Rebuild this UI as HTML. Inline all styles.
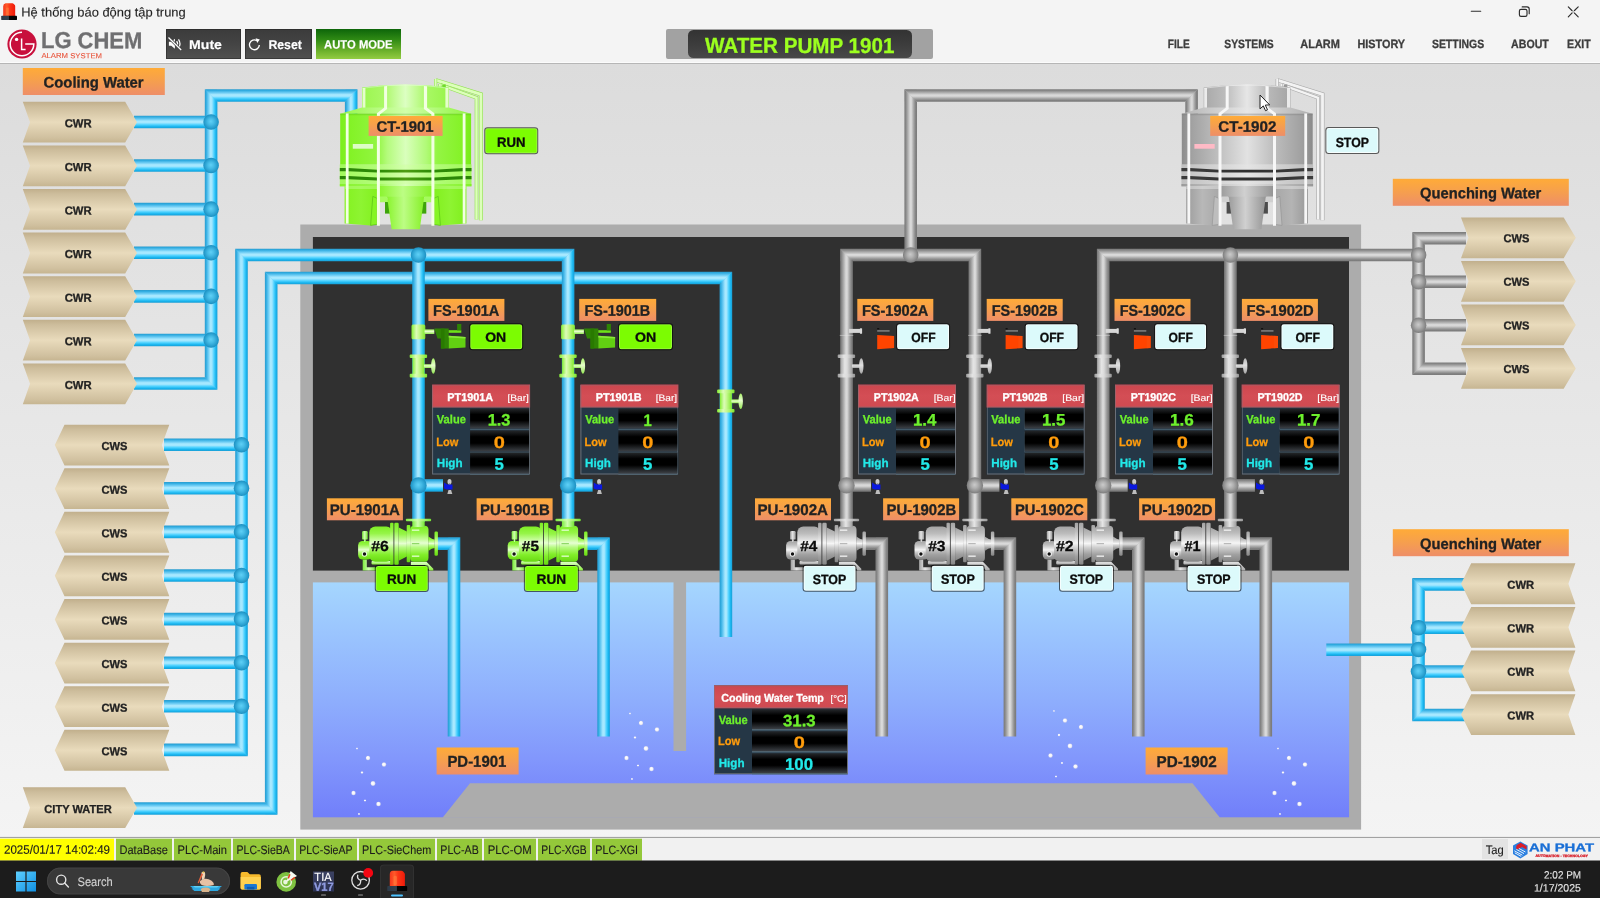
<!DOCTYPE html>
<html lang="vi">
<head>
<meta charset="utf-8">
<title>Hệ thống báo động tập trung - WATER PUMP 1901</title>
<style>
*{box-sizing:content-box;margin:0;padding:0}
html,body{width:1600px;height:898px;overflow:hidden;background:#f3f3f3}
body{position:relative;font-family:"Liberation Sans",sans-serif;font-weight:700;color:#222}
#scr{position:absolute;left:0;top:0;width:1600px;height:898px;overflow:hidden;will-change:transform}
#cv{position:absolute;left:0;top:64px;width:1600px;height:774px;background:linear-gradient(#dcdcdc,#f4f4f4)}
#gfx{position:absolute;left:0;top:0}
.t{position:absolute;white-space:nowrap;transform-origin:0 0;display:block;-webkit-text-stroke:.3px currentColor}
.t.r{-webkit-text-stroke:.12px currentColor}
.t.w{-webkit-text-stroke:.15px currentColor}
.lb,.bn,.pt,.ph,.pr,.pv{position:absolute;transform-origin:0 0}
.lb{background:linear-gradient(#ffab38,#f6a04c 45%,#ee8e68)}
.bn{box-sizing:border-box;border:1px solid rgba(0,0,0,.6);border-radius:3.3px;background-clip:padding-box;box-shadow:inset 0 0 0 1px rgba(255,255,255,.2)}
.bn.run{background:#7cfc02;background-clip:padding-box}
.bn.stop{background:#dcfafb;background-clip:padding-box;box-shadow:inset 0 0 0 1px rgba(255,255,255,.75)}
.pt{background:#253746;box-shadow:inset 0 0 0 1px #6b7078}
.ph{left:0;top:0;right:0;background:linear-gradient(#cc464e,#d44e55 50%,#cf4a51);box-shadow:inset 0 0 0 1px rgba(125,115,125,.5)}
.pr{left:0;right:0}
.pv{top:0;background:linear-gradient(#25282b,#000 30%,#000 60%,#393d42 97%,#3f454b);box-shadow:0 1.1px 0 #56707f}

.ic{position:absolute;display:block;overflow:visible}
#tb{position:absolute;left:0;top:0;width:1600px;height:25px;background:#f4f4f4}
#bar{position:absolute;left:0;top:25px;width:1600px;height:38px;background:#f4f4f4;border-bottom:1px solid #b6b6b6;box-shadow:0 1px 0 #d6d6d6,inset 0 -1px 0 #fbfbfb}
#logo{position:absolute;left:0;top:0;width:150px;height:38px}
.tbn{position:absolute;background:linear-gradient(#3b3b3b,#444 50%,#515150);box-shadow:inset 0 0 0 1px rgba(30,30,30,.45)}
.tbn.auto{background:linear-gradient(#0d650a,#2f8a14 35%,#6fb32c 75%,#93cc42);box-shadow:none}
#plate{position:absolute;left:666.4px;top:3.6px;width:266.4px;height:30.6px;background:#a2a2a2;border-radius:2px}
#plate2{position:absolute;left:21.2px;top:1.2px;width:224px;height:28px;background:linear-gradient(#333,#3c3c3c 50%,#484848);border-radius:5.5px}
#menu{list-style:none}
#sb{position:absolute;left:0;top:838px;width:1600px;height:23px;background:#f1f1f1;box-shadow:0 -1px 0 #a2a2a2,0 -2px 0 #ececec}
.sc{position:absolute;top:0;height:21.8px;transform:translateY(.7px)}
.sc.y{background:#ffff00}
.sc.g{background:#94c83a}
#tagb{position:absolute;left:1482px;top:1px;width:25.6px;height:20px;background:#e3e3e3}
#ap{position:absolute;left:1512px;top:3px;width:84px;height:18px}
#task{position:absolute;left:0;top:860px;width:1600px;height:38px;background:#1c1c1c;transform:translateY(.5px)}
#tki{position:absolute;left:0;top:.5px;width:1600px;height:37px}
#srch{position:absolute;left:46.6px;top:6px;width:183.6px;height:27px;border-radius:13.5px;background:#393939;box-shadow:inset 0 0 0 1px #444}
#tia{position:absolute;left:313px;top:10px;width:21px;height:20px;background:linear-gradient(#3c4262,#2b3152);overflow:hidden}
.dash{position:absolute;top:33.4px;width:5.4px;height:1.6px;border-radius:1px;background:#9a9a9a}
#act{position:absolute;left:380.4px;top:3.4px;width:33.4px;height:36px;border-radius:4px;background:#272727;box-shadow:inset 0 0 0 1px #313131}
#actl{position:absolute;left:390.6px;top:33px;width:12.8px;height:2.6px;border-radius:1.3px;background:#4cc2ff}
</style>
</head>
<body>
<div id="scr">
<header id="tb"><svg class="ic" style="left:1px;top:2.9px" width="16.1" height="17" viewBox="0 0 16.1 17" preserveAspectRatio="none"><defs><linearGradient id="srn1" x1="0" y1="0" x2="1" y2="0"><stop offset="0" stop-color="#f4361a"/><stop offset=".3" stop-color="#ff5a2a"/><stop offset=".55" stop-color="#fb3616"/><stop offset="1" stop-color="#ee1a0a"/></linearGradient><linearGradient id="srb1" x1="0" y1="0" x2="1" y2="0"><stop offset="0" stop-color="#2d3a48"/><stop offset=".46" stop-color="#33424f"/><stop offset=".5" stop-color="#050505"/><stop offset="1" stop-color="#000"/></linearGradient></defs><path d="M2.2 13 V3.2 Q2.2 0.5 4.6 0.2 H11.4 Q12.2 0.2 12.8 0.9 L13.8 2 Q14.2 2.5 14.2 3.2 V13 Z" fill="url(#srn1)"/><rect x="5.2" y="4.4" width="2.6" height="8" rx="1.2" fill="#ff7a3a" opacity=".7"/><path d="M0.2 13.4 Q0.2 12.7 1 12.7 H15.2 Q16 12.7 16 13.4 V16.6 Q16 17 15.6 17 H0.6 Q0.2 17 0.2 16.6 Z" fill="url(#srb1)"/></svg><span class="t r" style="left:21px;top:5px;font-size:12.6px;line-height:15px;font-weight:400;color:#1f1f1f;transform:translate(0.27px,0.43px) rotate(.03deg) scaleX(1.0256);">Hệ thống báo động tập trung</span><svg class="ic" style="left:1464px;top:0" width="130" height="24" viewBox="1464 0 130 24" fill="none" stroke="#2c2c2c" stroke-width="1.15" stroke-linecap="round"><path d="M1471.3 11.2 H1480.7"/><rect x="1519.4" y="9.4" width="7.6" height="7" rx="1.6"/><path d="M1522.2 6.9 H1527 Q1529.2 6.9 1529.2 9.1 V13.7"/><path d="M1568.3 6.9 L1571.9 10.5 M1574.5 13.1 L1578.2 16.8 M1578.2 6.9 L1574.5 10.5 M1571.9 13.1 L1568.3 16.8"/><path d="M1571.9 10.5 L1574.5 13.1 M1574.5 10.5 L1571.9 13.1" stroke-opacity=".3"/></svg></header>
<nav id="bar"><div id="logo"><svg class="ic" style="left:7px;top:3.6px" width="30" height="30" viewBox="0 0 30 30"><circle cx="15" cy="15" r="14.6" fill="#c8103c"/><path d="M15 3.2 A11.8 11.8 0 1 0 26.8 15 L18.2 15" fill="none" stroke="#fff" stroke-width="1.5"/><path d="M14.6 9.6 V20.6 H18.6" fill="none" stroke="#fff" stroke-width="1.5"/><circle cx="9.6" cy="10.4" r="1.7" fill="#fff"/></svg><span class="t" style="left:40px;top:2px;font-size:23px;line-height:27px;color:#6f6f71;transform:translate(0.97px,0.11px) rotate(.03deg) scaleX(0.9558);">LG CHEM</span><span class="t r" style="left:41px;top:26px;font-size:7.3px;line-height:9px;font-weight:400;color:#e8573f;transform:translate(0.4px,0.11px) rotate(.03deg) scaleX(1.0599);">ALARM SYSTEM</span></div><div class="tbn" style="left:166px;top:4px;width:75px;height:30px"><svg class="ic" style="left:1.6px;top:7.6px" width="14.2" height="13.4" viewBox="0 0 14.2 13.4"><path d="M0.9 4.7 H3.3 L6.9 1.7 V11.7 L3.3 8.7 H0.9 Z" fill="#fff"/><path d="M8.7 4.1 Q10.5 6.7 8.7 9.3 M10.5 2.3 Q13.5 6.7 10.5 11.1" fill="none" stroke="#fff" stroke-width="1.25"/><path d="M0.9 0.7 L13 12.9" stroke="#424242" stroke-width="2.8"/><path d="M0.5 0.5 L13.2 13" stroke="#fff" stroke-width="1.25"/></svg><span class="t w" style="left:23px;top:8px;font-size:12.8px;line-height:16px;color:#fff;transform:translate(0.08px,0px) rotate(.03deg) scaleX(1.1011);">Mute</span></div><div class="tbn" style="left:245px;top:4px;width:67px;height:30px"><svg class="ic" style="left:2.6px;top:8.6px" width="13" height="13" viewBox="0 0 13 13" fill="none" stroke="#fff" stroke-width="1.35"><path d="M11.3 6.9 A4.9 4.9 0 1 1 8.9 2.6"/><path d="M7.6 0.3 L11.8 1.5 L9.2 5 Z" fill="#fff" stroke="none"/></svg><span class="t w" style="left:23px;top:8px;font-size:12.8px;line-height:16px;color:#fff;transform:translate(0.4px,0px) rotate(.03deg) scaleX(0.9611);">Reset</span></div><div class="tbn auto" style="left:316px;top:4px;width:85px;height:30px"><span class="t w" style="left:8px;top:8px;font-size:12px;line-height:15px;color:#fff;transform:translate(0.12px,0.53px) rotate(.03deg) scaleX(0.937);">AUTO MODE</span></div><div id="plate"><div id="plate2"><span class="t" style="left:17px;top:2px;font-size:21.6px;line-height:26px;color:#9cff1f;transform:translate(0px,0.83px) rotate(.03deg) scaleX(0.9552);">WATER PUMP 1901</span></div></div><ul id="menu"><li><span class="t mi" style="left:1167px;top:12px;font-size:12px;line-height:15px;color:#3d3d3d;transform:translate(0.74px,0.33px) rotate(.03deg) scaleX(0.8475);">FILE</span></li><li><span class="t mi" style="left:1224px;top:12px;font-size:12px;line-height:15px;color:#3d3d3d;transform:translate(0.34px,0.33px) rotate(.03deg) scaleX(0.859);">SYSTEMS</span></li><li><span class="t mi" style="left:1300px;top:12px;font-size:12px;line-height:15px;color:#3d3d3d;transform:translate(0.33px,0.33px) rotate(.03deg) scaleX(0.9138);">ALARM</span></li><li><span class="t mi" style="left:1357px;top:12px;font-size:12px;line-height:15px;color:#3d3d3d;transform:translate(0.5px,0.33px) rotate(.03deg) scaleX(0.9038);">HISTORY</span></li><li><span class="t mi" style="left:1431px;top:12px;font-size:12px;line-height:15px;color:#3d3d3d;transform:translate(0.94px,0.33px) rotate(.03deg) scaleX(0.8704);">SETTINGS</span></li><li><span class="t mi" style="left:1511px;top:12px;font-size:12px;line-height:15px;color:#3d3d3d;transform:translate(0.13px,0.33px) rotate(.03deg) scaleX(0.8842);">ABOUT</span></li><li><span class="t mi" style="left:1567px;top:12px;font-size:12px;line-height:15px;color:#3d3d3d;transform:translate(0.11px,0.33px) rotate(.03deg) scaleX(0.8837);">EXIT</span></li></ul></nav>
<main id="cv"></main>
<svg id="gfx" width="1600" height="898" viewBox="0 0 1600 898">
<defs><linearGradient id="pbh" x1="0" y1="0" x2="0" y2="1" ><stop offset="0" stop-color="#2a9bcd"/><stop offset="0.1" stop-color="#2fabe0"/><stop offset="0.28" stop-color="#6cccf4"/><stop offset="0.44" stop-color="#a9e9ff"/><stop offset="0.56" stop-color="#a3e7ff"/><stop offset="0.72" stop-color="#4fd2ff"/><stop offset="0.88" stop-color="#17b4ee"/><stop offset="1" stop-color="#1c9ed4"/></linearGradient><linearGradient id="pbv" x1="0" y1="0" x2="1" y2="0" ><stop offset="0" stop-color="#2a9bcd"/><stop offset="0.1" stop-color="#2fabe0"/><stop offset="0.28" stop-color="#6cccf4"/><stop offset="0.44" stop-color="#a9e9ff"/><stop offset="0.56" stop-color="#a3e7ff"/><stop offset="0.72" stop-color="#4fd2ff"/><stop offset="0.88" stop-color="#17b4ee"/><stop offset="1" stop-color="#1c9ed4"/></linearGradient><linearGradient id="pgh" x1="0" y1="0" x2="0" y2="1" ><stop offset="0" stop-color="#7a7a7a"/><stop offset="0.1" stop-color="#858585"/><stop offset="0.3" stop-color="#b4b4b4"/><stop offset="0.46" stop-color="#dadada"/><stop offset="0.56" stop-color="#d6d6d6"/><stop offset="0.75" stop-color="#a2a2a2"/><stop offset="0.9" stop-color="#808080"/><stop offset="1" stop-color="#7a7a7a"/></linearGradient><linearGradient id="pgv" x1="0" y1="0" x2="1" y2="0" ><stop offset="0" stop-color="#7a7a7a"/><stop offset="0.1" stop-color="#858585"/><stop offset="0.3" stop-color="#b4b4b4"/><stop offset="0.46" stop-color="#dadada"/><stop offset="0.56" stop-color="#d6d6d6"/><stop offset="0.75" stop-color="#a2a2a2"/><stop offset="0.9" stop-color="#808080"/><stop offset="1" stop-color="#7a7a7a"/></linearGradient><radialGradient id="bb" cx="0.5" cy="0.5" r="0.5" fx="0.48" fy="0.46"><stop offset="0" stop-color="#5fd0f6"/><stop offset="0.4" stop-color="#45bbe6"/><stop offset="0.75" stop-color="#2ba2d2"/><stop offset="1" stop-color="#1c8fc0"/></radialGradient><radialGradient id="bg" cx="0.5" cy="0.5" r="0.5" fx="0.48" fy="0.46"><stop offset="0" stop-color="#cacaca"/><stop offset="0.4" stop-color="#b0b0b0"/><stop offset="0.75" stop-color="#929292"/><stop offset="1" stop-color="#7c7c7c"/></radialGradient><linearGradient id="water" x1="0" y1="0" x2="0" y2="1" ><stop offset="0" stop-color="#a5d6fe"/><stop offset="0.25" stop-color="#99c2fe"/><stop offset="0.5" stop-color="#8eaefd"/><stop offset="0.75" stop-color="#8297fc"/><stop offset="1" stop-color="#717ffa"/></linearGradient><linearGradient id="tag" x1="0" y1="0" x2="0" y2="1" ><stop offset="0" stop-color="#c1af8c"/><stop offset="0.12" stop-color="#cdbd9c"/><stop offset="0.5" stop-color="#e9dbbc"/><stop offset="0.88" stop-color="#d0c09f"/><stop offset="1" stop-color="#c6b591"/></linearGradient><radialGradient id="bub" cx="0.5" cy="0.5" r="0.5" fx="0.4" fy="0.38"><stop offset="0" stop-color="#ffffff"/><stop offset="0.6" stop-color="#f4f4fa"/><stop offset="1" stop-color="#c9cdea"/></radialGradient><linearGradient id="tGB" x1="0" y1="0" x2="1" y2="0" ><stop offset="0" stop-color="#7cee1c"/><stop offset="0.06" stop-color="#82f224"/><stop offset="0.28" stop-color="#92f540"/><stop offset="0.36" stop-color="#b4fb7c"/><stop offset="0.5" stop-color="#d9ffbc"/><stop offset="0.66" stop-color="#b0fa76"/><stop offset="0.74" stop-color="#94f544"/><stop offset="0.94" stop-color="#84f226"/><stop offset="1" stop-color="#78ea18"/></linearGradient><linearGradient id="tGB2" x1="0" y1="0" x2="1" y2="0" ><stop offset="0" stop-color="#96f648"/><stop offset="0.5" stop-color="#d0ffaa"/><stop offset="1" stop-color="#90f440"/></linearGradient><linearGradient id="tGH" x1="0" y1="0" x2="1" y2="0" ><stop offset="0" stop-color="#a2f95c"/><stop offset="0.3" stop-color="#b4fc7c"/><stop offset="0.5" stop-color="#d4ffae"/><stop offset="0.7" stop-color="#b4fc7c"/><stop offset="1" stop-color="#a0f858"/></linearGradient><linearGradient id="tGD" x1="0" y1="0" x2="1" y2="0" ><stop offset="0" stop-color="#2a8606"/><stop offset="0.3" stop-color="#2c8a06"/><stop offset="0.5" stop-color="#4c9c12"/><stop offset="0.7" stop-color="#2c8a06"/><stop offset="1" stop-color="#2a8606"/></linearGradient><linearGradient id="tGF" x1="0" y1="0" x2="1" y2="0" ><stop offset="0" stop-color="#8af42e"/><stop offset="0.45" stop-color="#bcfd84"/><stop offset="1" stop-color="#86f028"/></linearGradient><linearGradient id="tGL" x1="0" y1="0" x2="1" y2="0" ><stop offset="0" stop-color="#c8f5a8"/><stop offset="0.5" stop-color="#f0ffe0"/><stop offset="1" stop-color="#b4ec8c"/></linearGradient><linearGradient id="tGR" x1="0" y1="0" x2="1" y2="0" ><stop offset="0" stop-color="#b4f58c"/><stop offset="0.5" stop-color="#e4ffd0"/><stop offset="1" stop-color="#b4f58c"/></linearGradient><linearGradient id="tSB" x1="0" y1="0" x2="1" y2="0" ><stop offset="0" stop-color="#8c8c8c"/><stop offset="0.08" stop-color="#a2a2a2"/><stop offset="0.3" stop-color="#c2c2c2"/><stop offset="0.5" stop-color="#e2e2e2"/><stop offset="0.7" stop-color="#bebebe"/><stop offset="0.92" stop-color="#a0a0a0"/><stop offset="1" stop-color="#8a8a8a"/></linearGradient><linearGradient id="tSB2" x1="0" y1="0" x2="1" y2="0" ><stop offset="0" stop-color="#b4b4b4"/><stop offset="0.5" stop-color="#e6e6e6"/><stop offset="1" stop-color="#aeaeae"/></linearGradient><linearGradient id="tSH" x1="0" y1="0" x2="1" y2="0" ><stop offset="0" stop-color="#c0c0c0"/><stop offset="0.5" stop-color="#e4e4e4"/><stop offset="1" stop-color="#bcbcbc"/></linearGradient><linearGradient id="tSD" x1="0" y1="0" x2="1" y2="0" ><stop offset="0" stop-color="#3c3c3c"/><stop offset="0.5" stop-color="#2e2e2e"/><stop offset="1" stop-color="#3c3c3c"/></linearGradient><linearGradient id="tSF" x1="0" y1="0" x2="1" y2="0" ><stop offset="0" stop-color="#9c9c9c"/><stop offset="0.45" stop-color="#d0d0d0"/><stop offset="1" stop-color="#949494"/></linearGradient><linearGradient id="tSL" x1="0" y1="0" x2="1" y2="0" ><stop offset="0" stop-color="#c8c8c8"/><stop offset="0.5" stop-color="#f2f2f2"/><stop offset="1" stop-color="#b0b0b0"/></linearGradient><linearGradient id="tSR" x1="0" y1="0" x2="1" y2="0" ><stop offset="0" stop-color="#cccccc"/><stop offset="0.5" stop-color="#f0f0f0"/><stop offset="1" stop-color="#cccccc"/></linearGradient><linearGradient id="tGT" x1="0" y1="0" x2="1" y2="0" ><stop offset="0" stop-color="#9cf650"/><stop offset="0.25" stop-color="#aaf866"/><stop offset="0.5" stop-color="#dcffc2"/><stop offset="0.75" stop-color="#a8f864"/><stop offset="1" stop-color="#98f44a"/></linearGradient><linearGradient id="tST" x1="0" y1="0" x2="1" y2="0" ><stop offset="0" stop-color="#a8a8a8"/><stop offset="0.25" stop-color="#bcbcbc"/><stop offset="0.5" stop-color="#e6e6e6"/><stop offset="0.75" stop-color="#b8b8b8"/><stop offset="1" stop-color="#a4a4a4"/></linearGradient><linearGradient id="tGG1" x1="0" y1="0" x2="1" y2="0" ><stop offset="0" stop-color="#84f220"/><stop offset="0.5" stop-color="#8ef432"/><stop offset="1" stop-color="#82f01e"/></linearGradient><linearGradient id="tGG2" x1="0" y1="0" x2="1" y2="0" ><stop offset="0" stop-color="#82f01e"/><stop offset="0.5" stop-color="#8ef432"/><stop offset="1" stop-color="#80ee1c"/></linearGradient><linearGradient id="tSG1" x1="0" y1="0" x2="1" y2="0" ><stop offset="0" stop-color="#9c9c9c"/><stop offset="0.5" stop-color="#b8b8b8"/><stop offset="1" stop-color="#a8a8a8"/></linearGradient><linearGradient id="tSG2" x1="0" y1="0" x2="1" y2="0" ><stop offset="0" stop-color="#a8a8a8"/><stop offset="0.5" stop-color="#b4b4b4"/><stop offset="1" stop-color="#989898"/></linearGradient><linearGradient id="mGV" x1="0" y1="0" x2="0" y2="1" ><stop offset="0" stop-color="#7eee24"/><stop offset="0.2" stop-color="#96f548"/><stop offset="0.38" stop-color="#c8fd9e"/><stop offset="0.48" stop-color="#e6ffd2"/><stop offset="0.6" stop-color="#b6fa80"/><stop offset="0.8" stop-color="#82ee2a"/><stop offset="1" stop-color="#68d812"/></linearGradient><linearGradient id="mGH" x1="0" y1="0" x2="0" y2="1" ><stop offset="0" stop-color="#e0ffc8"/><stop offset="0.5" stop-color="#b4f884"/><stop offset="1" stop-color="#8cec3c"/></linearGradient><linearGradient id="mGC" x1="0" y1="0" x2="1" y2="0" ><stop offset="0" stop-color="#7cec3e"/><stop offset="0.45" stop-color="#d0ffb0"/><stop offset="1" stop-color="#74e432"/></linearGradient><linearGradient id="mSV" x1="0" y1="0" x2="0" y2="1" ><stop offset="0" stop-color="#a4a4a4"/><stop offset="0.2" stop-color="#bcbcbc"/><stop offset="0.38" stop-color="#e0e0e0"/><stop offset="0.48" stop-color="#f6f6f6"/><stop offset="0.6" stop-color="#d0d0d0"/><stop offset="0.8" stop-color="#a0a0a0"/><stop offset="1" stop-color="#858585"/></linearGradient><linearGradient id="mSH" x1="0" y1="0" x2="0" y2="1" ><stop offset="0" stop-color="#e2e2e2"/><stop offset="0.5" stop-color="#c4c4c4"/><stop offset="1" stop-color="#a8a8a8"/></linearGradient><linearGradient id="mSC" x1="0" y1="0" x2="1" y2="0" ><stop offset="0" stop-color="#a0a0a0"/><stop offset="0.45" stop-color="#e6e6e6"/><stop offset="1" stop-color="#9a9a9a"/></linearGradient><linearGradient id="vGh" x1="0" y1="0" x2="1" y2="0" ><stop offset="0" stop-color="#86ee34"/><stop offset="0.35" stop-color="#dcfcb8"/><stop offset="0.55" stop-color="#c6f890"/><stop offset="1" stop-color="#80e82c"/></linearGradient><linearGradient id="vGv" x1="0" y1="0" x2="0" y2="1" ><stop offset="0" stop-color="#a6f066"/><stop offset="0.45" stop-color="#e6fecc"/><stop offset="1" stop-color="#92e652"/></linearGradient><linearGradient id="vSh" x1="0" y1="0" x2="1" y2="0" ><stop offset="0" stop-color="#a8a8a8"/><stop offset="0.35" stop-color="#e8e8e8"/><stop offset="0.55" stop-color="#dcdcdc"/><stop offset="1" stop-color="#a0a0a0"/></linearGradient><linearGradient id="vSv" x1="0" y1="0" x2="0" y2="1" ><stop offset="0" stop-color="#c4c4c4"/><stop offset="0.45" stop-color="#f0f0f0"/><stop offset="1" stop-color="#b0b0b0"/></linearGradient></defs>
<rect x="300.3" y="224.5" width="1060.8" height="605.1" fill="#acacac" />
<rect x="312.9" y="237" width="1036.1" height="333.6" fill="#303030" />
<rect x="312.9" y="582.4" width="1036.2" height="234.9" fill="url(#water)" />
<polygon points="442.5,817.8 470,783.2 1192.5,783.2 1220,817.8" fill="#acacac" />
<rect x="673.5" y="582" width="12.6" height="169" fill="#acacac" />
<rect x="205.3" y="377.75" width="11.6" height="11.6" fill="#62cbf6"/>
<rect x="205.3" y="89.7" width="11.6" height="11.6" fill="#62cbf6"/>
<rect x="345.4" y="89.7" width="11.6" height="11.6" fill="#62cbf6"/>
<polygon points="134,377.25 204.8,377.25 217.4,389.85 134,389.85" fill="url(#pbh)"/>
<polygon points="204.8,377.25 217.4,389.85 217.4,101.8 204.8,89.2" fill="url(#pbv)"/>
<polygon points="204.8,89.2 357.5,89.2 344.9,101.8 217.4,101.8" fill="url(#pbh)"/>
<polygon points="344.9,101.8 357.5,89.2 357.5,120 344.9,120" fill="url(#pbv)"/>
<rect x="904.9" y="89.7" width="11.6" height="11.6" fill="#b2b2b2"/>
<rect x="1185.8" y="89.7" width="11.6" height="11.6" fill="#b2b2b2"/>
<polygon points="904.4,255 917,255 917,101.8 904.4,89.2" fill="url(#pgv)"/>
<polygon points="904.4,89.2 1197.9,89.2 1185.3,101.8 917,101.8" fill="url(#pgh)"/>
<polygon points="1185.3,101.8 1197.9,89.2 1197.9,120 1185.3,120" fill="url(#pgv)"/>
<g transform="translate(340.2,0)">
<path d="M95.6 80.2 L140.7 94.3 L140.7 220.2" fill="none" stroke="#92e052" stroke-width="4"/>
<path d="M95.6 80.2 L140.7 94.3 L140.7 220.2" fill="none" stroke="#dcffba" stroke-width="2.8"/>
<path d="M99.6 84.6 L136.3 97.8 L136.3 219.6" fill="none" stroke="#92e052" stroke-width="3.6"/>
<path d="M99.6 84.6 L136.3 97.8 L136.3 219.6" fill="none" stroke="#dcffba" stroke-width="2.4"/>
<path d="M95.4 79 V108 M99.6 84 V108" fill="none" stroke="#92e052" stroke-width="3.2"/>
<path d="M95.4 79 V108 M99.6 84 V108" fill="none" stroke="#dcffba" stroke-width="2"/>
<rect x="102" y="84.6" width="3.6" height="5" fill="#6fdc2a"/>
<path d="M21.9 108 L21.9 87.6 Q65.3 81.3 108.6 87.6 L108.6 108 Z" fill="url(#tGT)"/>
<path d="M21.9 88.2 Q65.3 81.9 108.6 88.2" fill="none" stroke="url(#tGR)" stroke-width="1.1"/>
<path d="M21.9 107.4 L108.6 107.4 L130.9 113.8 L0 113.8 Z" fill="url(#tGB2)"/>
<rect x="0" y="113.6" width="130.9" height="51.2" fill="url(#tGB)"/>
<rect x="0" y="113.6" width="130.9" height="1.6" fill="#58c018" opacity=".35"/>
<rect x="-0.4" y="164.4" width="131.7" height="21.8" fill="url(#tGH)"/>
<path d="M-0.4 168.1 L8 168.1 L37 169.8 L94 169.8 L123 168.1 L131.3 168.1 L131.3 171.2 L123 171.2 L94 172.6 L37 172.6 L8 171.2 L-0.4 171.2 Z" fill="url(#tGD)"/>
<path d="M-0.4 175.9 L8 175.9 L37 177.6 L94 177.6 L123 175.9 L131.3 175.9 L131.3 179.2 L123 179.2 L94 180.6 L37 180.6 L8 179.2 L-0.4 179.2 Z" fill="url(#tGD)"/>
<rect x="-0.4" y="184" width="131.7" height="2.4" fill="url(#tGB)" opacity=".75"/>
<path d="M4.4 186 L37 186 L37 224.4 L30.4 225.4 L4.4 223.4 Z" fill="url(#tGG1)"/>
<path d="M126.2 186 L93.6 186 L93.6 224.4 L100.2 225.4 L126.2 223.4 Z" fill="url(#tGG2)"/>
<rect x="4.4" y="186" width="121.8" height="3" fill="#bdfd8c" opacity=".5"/>
<path d="M32.6 196.4 L37 198.4 L37 224.4 L30.4 225.4 Z" fill="#86f524" stroke="#49ad12" stroke-width=".5"/>
<path d="M98 196.4 L93.6 198.4 L93.6 224.4 L100.2 225.4 Z" fill="#86f524" stroke="#49ad12" stroke-width=".5"/>
<rect x="39" y="186" width="52.8" height="11.4" fill="url(#tGF)"/>
<path d="M39.6 196.6 L46.2 196.6 L48.8 202.2 L39.6 202.2 Z M91.2 196.6 L84.6 196.6 L82 202.2 L91.2 202.2 Z" fill="#a6fb5e"/>
<rect x="44.8" y="202" width="5.4" height="11.6" fill="#3fa40c"/>
<rect x="80.7" y="202" width="5.4" height="11.6" fill="#3fa40c"/>
<path d="M46.9 196.8 L84 196.8 L79.6 229.2 L51.4 229.2 Z" fill="url(#tGF)"/>
<rect x="5.6" y="113.4" width="2.8" height="110.2" fill="#f2ffe2"/>
<rect x="122.5" y="113.4" width="2.8" height="110.2" fill="#f2ffe2"/>
<path d="M36.7 225.7 L36.7 113.2 L43.9 107.8 L43.9 86.3 L46.9 86 L46.9 109 L39.7 114.4 L39.7 225.7 Z" fill="#f2ffe2"/>
<path d="M94.2 225.7 L94.2 113.2 L86.9 107.8 L86.9 86.3 L83.7 86 L83.7 109 L91.2 114.4 L91.2 225.7 Z" fill="#f2ffe2"/>
<rect x="22.4" y="88" width="2.8" height="19.6" fill="#f2ffe2" opacity=".85"/>
<rect x="105.2" y="88" width="3" height="19.6" fill="#f2ffe2" opacity=".85"/>
<rect x="12.6" y="144" width="20.3" height="4.7" fill="#ddfdc6"/>
</g>
<g transform="translate(1181.8,0)">
<path d="M95.6 80.2 L140.7 94.3 L140.7 220.2" fill="none" stroke="#a9a9a9" stroke-width="4"/>
<path d="M95.6 80.2 L140.7 94.3 L140.7 220.2" fill="none" stroke="#f3f3f3" stroke-width="2.8"/>
<path d="M99.6 84.6 L136.3 97.8 L136.3 219.6" fill="none" stroke="#a9a9a9" stroke-width="3.6"/>
<path d="M99.6 84.6 L136.3 97.8 L136.3 219.6" fill="none" stroke="#f3f3f3" stroke-width="2.4"/>
<path d="M95.4 79 V108 M99.6 84 V108" fill="none" stroke="#a9a9a9" stroke-width="3.2"/>
<path d="M95.4 79 V108 M99.6 84 V108" fill="none" stroke="#f3f3f3" stroke-width="2"/>
<rect x="102" y="84.6" width="3.6" height="5" fill="#9a9a9a"/>
<path d="M21.9 108 L21.9 87.6 Q65.3 81.3 108.6 87.6 L108.6 108 Z" fill="url(#tST)"/>
<path d="M21.9 88.2 Q65.3 81.9 108.6 88.2" fill="none" stroke="url(#tSR)" stroke-width="1.1"/>
<path d="M21.9 107.4 L108.6 107.4 L130.9 113.8 L0 113.8 Z" fill="url(#tSB2)"/>
<rect x="0" y="113.6" width="130.9" height="51.2" fill="url(#tSB)"/>
<rect x="0" y="113.6" width="130.9" height="1.6" fill="#7a7a7a" opacity=".35"/>
<rect x="-0.4" y="164.4" width="131.7" height="21.8" fill="url(#tSH)"/>
<path d="M-0.4 168.1 L8 168.1 L37 169.8 L94 169.8 L123 168.1 L131.3 168.1 L131.3 171.2 L123 171.2 L94 172.6 L37 172.6 L8 171.2 L-0.4 171.2 Z" fill="url(#tSD)"/>
<path d="M-0.4 175.9 L8 175.9 L37 177.6 L94 177.6 L123 175.9 L131.3 175.9 L131.3 179.2 L123 179.2 L94 180.6 L37 180.6 L8 179.2 L-0.4 179.2 Z" fill="url(#tSD)"/>
<rect x="-0.4" y="184" width="131.7" height="2.4" fill="url(#tSB)" opacity=".75"/>
<path d="M4.4 186 L37 186 L37 224.4 L30.4 225.4 L4.4 223.4 Z" fill="url(#tSG1)"/>
<path d="M126.2 186 L93.6 186 L93.6 224.4 L100.2 225.4 L126.2 223.4 Z" fill="url(#tSG2)"/>
<rect x="4.4" y="186" width="121.8" height="3" fill="#e4e4e4" opacity=".5"/>
<path d="M32.6 196.4 L37 198.4 L37 224.4 L30.4 225.4 Z" fill="#bdbdbd" stroke="#8a8a8a" stroke-width=".5"/>
<path d="M98 196.4 L93.6 198.4 L93.6 224.4 L100.2 225.4 Z" fill="#bdbdbd" stroke="#8a8a8a" stroke-width=".5"/>
<rect x="39" y="186" width="52.8" height="11.4" fill="url(#tSF)"/>
<path d="M39.6 196.6 L46.2 196.6 L48.8 202.2 L39.6 202.2 Z M91.2 196.6 L84.6 196.6 L82 202.2 L91.2 202.2 Z" fill="#d0d0d0"/>
<rect x="44.8" y="202" width="5.4" height="11.6" fill="#4c4c4c"/>
<rect x="80.7" y="202" width="5.4" height="11.6" fill="#4c4c4c"/>
<path d="M46.9 196.8 L84 196.8 L79.6 229.2 L51.4 229.2 Z" fill="url(#tSF)"/>
<rect x="5.6" y="113.4" width="2.8" height="110.2" fill="#f7f7f7"/>
<rect x="122.5" y="113.4" width="2.8" height="110.2" fill="#f7f7f7"/>
<path d="M36.7 225.7 L36.7 113.2 L43.9 107.8 L43.9 86.3 L46.9 86 L46.9 109 L39.7 114.4 L39.7 225.7 Z" fill="#f7f7f7"/>
<path d="M94.2 225.7 L94.2 113.2 L86.9 107.8 L86.9 86.3 L83.7 86 L83.7 109 L91.2 114.4 L91.2 225.7 Z" fill="#f7f7f7"/>
<rect x="22.4" y="88" width="2.8" height="19.6" fill="#f7f7f7" opacity=".85"/>
<rect x="105.2" y="88" width="3" height="19.6" fill="#f7f7f7" opacity=".85"/>
<rect x="12.6" y="144" width="20.3" height="4.7" fill="#ffbac6"/>
</g>
<rect x="265.4" y="802.65" width="11.6" height="11.6" fill="#62cbf6"/>
<rect x="265.4" y="272.2" width="11.6" height="11.6" fill="#62cbf6"/>
<rect x="720.1" y="272.2" width="11.6" height="11.6" fill="#62cbf6"/>
<polygon points="134,802.15 264.9,802.15 277.5,814.75 134,814.75" fill="url(#pbh)"/>
<polygon points="264.9,802.15 277.5,814.75 277.5,284.3 264.9,271.7" fill="url(#pbv)"/>
<polygon points="264.9,271.7 732.2,271.7 719.6,284.3 277.5,284.3" fill="url(#pbh)"/>
<polygon points="719.6,284.3 732.2,271.7 732.2,637 719.6,637" fill="url(#pbv)"/>
<polygon points="134,115.65 211.1,115.65 211.1,128.25 134,128.25" fill="url(#pbh)"/>
<polygon points="134,159.25 211.1,159.25 211.1,171.85 134,171.85" fill="url(#pbh)"/>
<polygon points="134,202.85 211.1,202.85 211.1,215.45 134,215.45" fill="url(#pbh)"/>
<polygon points="134,246.45 211.1,246.45 211.1,259.05 134,259.05" fill="url(#pbh)"/>
<polygon points="134,290.05 211.1,290.05 211.1,302.65 134,302.65" fill="url(#pbh)"/>
<polygon points="134,333.65 211.1,333.65 211.1,346.25 134,346.25" fill="url(#pbh)"/>
<circle cx="211.1" cy="121.95" r="7.8" fill="url(#bb)"/>
<circle cx="211.1" cy="165.55" r="7.8" fill="url(#bb)"/>
<circle cx="211.1" cy="209.15" r="7.8" fill="url(#bb)"/>
<circle cx="211.1" cy="252.75" r="7.8" fill="url(#bb)"/>
<circle cx="211.1" cy="296.35" r="7.8" fill="url(#bb)"/>
<circle cx="211.1" cy="339.95" r="7.8" fill="url(#bb)"/>
<rect x="235.7" y="744.1" width="11.6" height="11.6" fill="#62cbf6"/>
<rect x="235.7" y="249.2" width="11.6" height="11.6" fill="#62cbf6"/>
<rect x="562.3" y="249.2" width="11.6" height="11.6" fill="#62cbf6"/>
<polygon points="164,743.6 235.2,743.6 247.8,756.2 164,756.2" fill="url(#pbh)"/>
<polygon points="235.2,743.6 247.8,756.2 247.8,261.3 235.2,248.7" fill="url(#pbv)"/>
<polygon points="235.2,248.7 574.4,248.7 561.8,261.3 247.8,261.3" fill="url(#pbh)"/>
<polygon points="561.8,261.3 574.4,248.7 574.4,522 561.8,522" fill="url(#pbv)"/>
<polygon points="412.2,255 424.8,255 424.8,522 412.2,522" fill="url(#pbv)"/>
<polygon points="164,438.4 241.5,438.4 241.5,451 164,451" fill="url(#pbh)"/>
<polygon points="164,482 241.5,482 241.5,494.6 164,494.6" fill="url(#pbh)"/>
<polygon points="164,525.6 241.5,525.6 241.5,538.2 164,538.2" fill="url(#pbh)"/>
<polygon points="164,569.2 241.5,569.2 241.5,581.8 164,581.8" fill="url(#pbh)"/>
<polygon points="164,612.8 241.5,612.8 241.5,625.4 164,625.4" fill="url(#pbh)"/>
<polygon points="164,656.4 241.5,656.4 241.5,669 164,669" fill="url(#pbh)"/>
<polygon points="164,700 241.5,700 241.5,712.6 164,712.6" fill="url(#pbh)"/>
<circle cx="241.5" cy="444.7" r="7.8" fill="url(#bb)"/>
<circle cx="241.5" cy="488.3" r="7.8" fill="url(#bb)"/>
<circle cx="241.5" cy="531.9" r="7.8" fill="url(#bb)"/>
<circle cx="241.5" cy="575.5" r="7.8" fill="url(#bb)"/>
<circle cx="241.5" cy="619.1" r="7.8" fill="url(#bb)"/>
<circle cx="241.5" cy="662.7" r="7.8" fill="url(#bb)"/>
<circle cx="241.5" cy="706.3" r="7.8" fill="url(#bb)"/>
<circle cx="418.5" cy="255" r="7.8" fill="url(#bb)"/>
<polygon points="418.5,479.1 443,479.1 443,491.7 418.5,491.7" fill="url(#pbh)"/>
<circle cx="418.5" cy="485.4" r="8.2" fill="url(#bb)"/>
<rect x="448.2" y="537.8" width="11.6" height="11.6" fill="#62cbf6"/>
<polygon points="437,537.3 460.3,537.3 447.7,549.9 437,549.9" fill="url(#pbh)"/>
<polygon points="447.7,549.9 460.3,537.3 460.3,736.4 447.7,736.4" fill="url(#pbv)"/>
<polygon points="568.1,479.1 592.6,479.1 592.6,491.7 568.1,491.7" fill="url(#pbh)"/>
<circle cx="568.1" cy="485.4" r="8.2" fill="url(#bb)"/>
<rect x="597.8" y="537.8" width="11.6" height="11.6" fill="#62cbf6"/>
<polygon points="586.6,537.3 609.9,537.3 597.3,549.9 586.6,549.9" fill="url(#pbh)"/>
<polygon points="597.3,549.9 609.9,537.3 609.9,736.4 597.3,736.4" fill="url(#pbv)"/>
<rect x="1412.7" y="578.6" width="11.6" height="11.6" fill="#62cbf6"/>
<rect x="1412.7" y="709.15" width="11.6" height="11.6" fill="#62cbf6"/>
<polygon points="1466,578.1 1412.2,578.1 1424.8,590.7 1466,590.7" fill="url(#pbh)"/>
<polygon points="1412.2,578.1 1424.8,590.7 1424.8,708.65 1412.2,721.25" fill="url(#pbv)"/>
<polygon points="1424.8,708.65 1466,708.65 1466,721.25 1412.2,721.25" fill="url(#pbh)"/>
<polygon points="1418.5,621.5 1466,621.5 1466,634.1 1418.5,634.1" fill="url(#pbh)"/>
<polygon points="1418.5,665.2 1466,665.2 1466,677.8 1418.5,677.8" fill="url(#pbh)"/>
<polygon points="1326.3,643.4 1418.5,643.4 1418.5,656 1326.3,656" fill="url(#pbh)"/>
<circle cx="1418.5" cy="627.8" r="7.8" fill="url(#bb)"/>
<circle cx="1418.5" cy="671.5" r="7.8" fill="url(#bb)"/>
<circle cx="1418.5" cy="649.5" r="7.8" fill="url(#bb)"/>
<rect x="840.7" y="249.2" width="11.6" height="11.6" fill="#b2b2b2"/>
<rect x="969.1" y="249.2" width="11.6" height="11.6" fill="#b2b2b2"/>
<polygon points="840.2,522 852.8,522 852.8,261.3 840.2,248.7" fill="url(#pgv)"/>
<polygon points="840.2,248.7 981.2,248.7 968.6,261.3 852.8,261.3" fill="url(#pgh)"/>
<polygon points="968.6,261.3 981.2,248.7 981.2,522 968.6,522" fill="url(#pgv)"/>
<circle cx="910.7" cy="255" r="7.8" fill="url(#bg)"/>
<rect x="1097.4" y="249.2" width="11.6" height="11.6" fill="#b2b2b2"/>
<polygon points="1096.9,522 1109.5,522 1109.5,261.3 1096.9,248.7" fill="url(#pgv)"/>
<polygon points="1096.9,248.7 1418.6,248.7 1418.6,261.3 1109.5,261.3" fill="url(#pgh)"/>
<polygon points="1224.1,255 1236.7,255 1236.7,522 1224.1,522" fill="url(#pgv)"/>
<rect x="1412.8" y="232.4" width="11.6" height="11.6" fill="#b2b2b2"/>
<rect x="1412.8" y="362.9" width="11.6" height="11.6" fill="#b2b2b2"/>
<polygon points="1466,231.9 1412.3,231.9 1424.9,244.5 1466,244.5" fill="url(#pgh)"/>
<polygon points="1412.3,231.9 1424.9,244.5 1424.9,362.4 1412.3,375" fill="url(#pgv)"/>
<polygon points="1424.9,362.4 1466,362.4 1466,375 1412.3,375" fill="url(#pgh)"/>
<polygon points="1418.6,275.4 1466,275.4 1466,288 1418.6,288" fill="url(#pgh)"/>
<polygon points="1418.6,318.9 1466,318.9 1466,331.5 1418.6,331.5" fill="url(#pgh)"/>
<circle cx="1230.4" cy="255" r="7.8" fill="url(#bg)"/>
<circle cx="1418.6" cy="255" r="7.8" fill="url(#bg)"/>
<circle cx="1418.6" cy="281.7" r="7.8" fill="url(#bg)"/>
<circle cx="1418.6" cy="325.2" r="7.8" fill="url(#bg)"/>
<polygon points="846.5,479.1 871,479.1 871,491.7 846.5,491.7" fill="url(#pgh)"/>
<circle cx="846.5" cy="485.4" r="8.2" fill="url(#bg)"/>
<rect x="876" y="537.8" width="11.6" height="11.6" fill="#b2b2b2"/>
<polygon points="864.8,537.3 888.1,537.3 875.5,549.9 864.8,549.9" fill="url(#pgh)"/>
<polygon points="875.5,549.9 888.1,537.3 888.1,736.4 875.5,736.4" fill="url(#pgv)"/>
<polygon points="974.9,479.1 999.4,479.1 999.4,491.7 974.9,491.7" fill="url(#pgh)"/>
<circle cx="974.9" cy="485.4" r="8.2" fill="url(#bg)"/>
<rect x="1004.1" y="537.8" width="11.6" height="11.6" fill="#b2b2b2"/>
<polygon points="992.9,537.3 1016.2,537.3 1003.6,549.9 992.9,549.9" fill="url(#pgh)"/>
<polygon points="1003.6,549.9 1016.2,537.3 1016.2,736.4 1003.6,736.4" fill="url(#pgv)"/>
<polygon points="1103.2,479.1 1127.7,479.1 1127.7,491.7 1103.2,491.7" fill="url(#pgh)"/>
<circle cx="1103.2" cy="485.4" r="8.2" fill="url(#bg)"/>
<rect x="1132.5" y="537.8" width="11.6" height="11.6" fill="#b2b2b2"/>
<polygon points="1121.3,537.3 1144.6,537.3 1132,549.9 1121.3,549.9" fill="url(#pgh)"/>
<polygon points="1132,549.9 1144.6,537.3 1144.6,736.4 1132,736.4" fill="url(#pgv)"/>
<polygon points="1230.4,479.1 1254.9,479.1 1254.9,491.7 1230.4,491.7" fill="url(#pgh)"/>
<circle cx="1230.4" cy="485.4" r="8.2" fill="url(#bg)"/>
<rect x="1260" y="537.8" width="11.6" height="11.6" fill="#b2b2b2"/>
<polygon points="1248.8,537.3 1272.1,537.3 1259.5,549.9 1248.8,549.9" fill="url(#pgh)"/>
<polygon points="1259.5,549.9 1272.1,537.3 1272.1,736.4 1259.5,736.4" fill="url(#pgv)"/>
<circle cx="357" cy="748.5" r="0.9" fill="url(#bub)"/>
<circle cx="368" cy="758" r="2.2" fill="url(#bub)"/>
<circle cx="384" cy="764.5" r="2.2" fill="url(#bub)"/>
<circle cx="362" cy="772.5" r="1.2" fill="url(#bub)"/>
<circle cx="373" cy="783.5" r="2.4" fill="url(#bub)"/>
<circle cx="353.5" cy="793" r="2.2" fill="url(#bub)"/>
<circle cx="365" cy="800.5" r="1.1" fill="url(#bub)"/>
<circle cx="378.5" cy="804" r="2.3" fill="url(#bub)"/>
<circle cx="359" cy="814" r="1" fill="url(#bub)"/>
<circle cx="630" cy="713.5" r="0.9" fill="url(#bub)"/>
<circle cx="641" cy="723" r="2.2" fill="url(#bub)"/>
<circle cx="657" cy="729.5" r="2.2" fill="url(#bub)"/>
<circle cx="635" cy="737.5" r="1.2" fill="url(#bub)"/>
<circle cx="646" cy="748.5" r="2.4" fill="url(#bub)"/>
<circle cx="626.5" cy="758" r="2.2" fill="url(#bub)"/>
<circle cx="638" cy="765.5" r="1.1" fill="url(#bub)"/>
<circle cx="651.5" cy="769" r="2.3" fill="url(#bub)"/>
<circle cx="632" cy="779" r="1" fill="url(#bub)"/>
<circle cx="1054" cy="711" r="0.9" fill="url(#bub)"/>
<circle cx="1065" cy="720.5" r="2.2" fill="url(#bub)"/>
<circle cx="1081" cy="727" r="2.2" fill="url(#bub)"/>
<circle cx="1059" cy="735" r="1.2" fill="url(#bub)"/>
<circle cx="1070" cy="746" r="2.4" fill="url(#bub)"/>
<circle cx="1050.5" cy="755.5" r="2.2" fill="url(#bub)"/>
<circle cx="1062" cy="763" r="1.1" fill="url(#bub)"/>
<circle cx="1075.5" cy="766.5" r="2.3" fill="url(#bub)"/>
<circle cx="1056" cy="776.5" r="1" fill="url(#bub)"/>
<circle cx="1278" cy="748.5" r="0.9" fill="url(#bub)"/>
<circle cx="1289" cy="758" r="2.2" fill="url(#bub)"/>
<circle cx="1305" cy="764.5" r="2.2" fill="url(#bub)"/>
<circle cx="1283" cy="772.5" r="1.2" fill="url(#bub)"/>
<circle cx="1294" cy="783.5" r="2.4" fill="url(#bub)"/>
<circle cx="1274.5" cy="793" r="2.2" fill="url(#bub)"/>
<circle cx="1286" cy="800.5" r="1.1" fill="url(#bub)"/>
<circle cx="1299.5" cy="804" r="2.3" fill="url(#bub)"/>
<circle cx="1280" cy="814" r="1" fill="url(#bub)"/>
<g transform="translate(307.3,35.2)">
<g>
<rect x="412.6" y="356" width="12" height="20" fill="url(#vGh)"/>
<rect x="409.8" y="354.4" width="17.4" height="3.6" rx="1" fill="url(#vGh)"/>
<rect x="409.8" y="373.8" width="17.4" height="3.6" rx="1" fill="url(#vGh)"/>
<rect x="424" y="364.2" width="8.4" height="3.8" fill="url(#vGv)"/>
<ellipse cx="433.4" cy="366" rx="2.2" ry="7.8" fill="url(#vGv)"/>
</g></g>
<g transform="translate(-0.1,0)">
<rect x="411.6" y="324.6" width="13.8" height="14.6" rx="1.5" fill="url(#vGh)"/>
<rect x="424.6" y="329.4" width="9.8" height="4.6" fill="url(#vGv)"/>
<path d="M434.4 328.6 L448.8 328.6 L448.8 348.6 L441 348.6 L441 338.6 L437.6 338.6 Z" fill="#2f8404"/>
<rect x="441" y="328.6" width="3.6" height="20" fill="#297a00"/>
<path d="M448.8 335.8 L465.6 337 L465.6 347.6 L448.8 348.6 Z" fill="#62d012"/>
<path d="M448.8 335.8 L465.6 337 L465.6 338.4 L448.8 337.4 Z" fill="#8ae83a"/>
<rect x="448.8" y="330.2" width="12.6" height="2.6" fill="#6ee018"/>
<rect x="457.2" y="324" width="4.2" height="6.4" fill="#2f8404"/>
</g>
<g transform="translate(-0.1,0)">
<g>
<rect x="412.6" y="356" width="12" height="20" fill="url(#vGh)"/>
<rect x="409.8" y="354.4" width="17.4" height="3.6" rx="1" fill="url(#vGh)"/>
<rect x="409.8" y="373.8" width="17.4" height="3.6" rx="1" fill="url(#vGh)"/>
<rect x="424" y="364.2" width="8.4" height="3.8" fill="url(#vGv)"/>
<ellipse cx="433.4" cy="366" rx="2.2" ry="7.8" fill="url(#vGv)"/>
</g></g>
<g transform="translate(-0.1,0)">
<ellipse cx="449.6" cy="481.8" rx="2" ry="2.8" fill="#c9c9c9"/>
<rect x="448.9" y="483" width="1.6" height="3" fill="#9a9a9a"/>
<path d="M444.2 482.6 L447.4 484.6 L452.6 484.6 L452.6 489.6 L446.6 489.6 L444.2 488.4 Z" fill="#0a18e0"/>
<path d="M448.6 490 L451.2 490 L452.4 494 L447.4 494 Z" fill="#bdbdbd"/>
</g>
<g transform="translate(-0.1,0)">
<path d="M362.8 559.6 L366.9 559.6 L366.9 567.2 L376 567.2 L376 570.6 L362.8 570.6 Z" fill="url(#mGC)"/>
<rect x="371.6" y="561" width="20.4" height="3.4" rx="1" fill="url(#mGH)"/>
<path d="M411 561.8 H426.6 L433.4 568.8 V570.6 H429.6 L425 565 H411 Z" fill="url(#mGH)"/>
<rect x="358.2" y="541" width="14" height="18.6" rx="4.5" fill="url(#mGV)"/>
<circle cx="364.6" cy="554" r="2.7" fill="#e9ffd8"/>
<circle cx="364.6" cy="554" r="1.7" fill="#111"/>
<rect x="362.2" y="531" width="5.6" height="8.6" rx="1.2" fill="url(#mGC)"/>
<rect x="364" y="539" width="2" height="3" fill="url(#mGC)"/>
<rect x="369.4" y="526.4" width="23" height="35.4" rx="6" fill="url(#mGV)"/>
<rect x="390.2" y="522.8" width="3.4" height="42" rx="1" fill="url(#mGV)"/>
<rect x="394.4" y="522.8" width="4.4" height="42" rx="1.2" fill="url(#mGV)"/>
<path d="M398.8 527.5 L407 531.5 L407 556.5 L398.8 560.8 Z" fill="url(#mGV)"/>
<rect x="406.8" y="525" width="3.6" height="37.2" rx="1" fill="url(#mGV)"/>
<rect x="410.2" y="525.8" width="18.4" height="36" rx="4" fill="url(#mGV)"/>
<rect x="412" y="529.4" width="7.4" height="1.6" fill="#e6ffd4" opacity="0.8"/>
<rect x="412" y="543" width="7.4" height="1.2" fill="#4fb81c" opacity="0.55"/>
<rect x="412" y="555.4" width="7.4" height="1.6" fill="#e6ffd4" opacity="0.8"/>
<rect x="412.4" y="520.6" width="12.4" height="6.4" fill="url(#mGC)"/>
<rect x="406" y="518.8" width="25.2" height="2.4" rx="0.8" fill="url(#mGC)"/>
<path d="M428.4 536.6 Q432 539.4 434.8 539.4 L434.8 548 Q432 548 428.4 551 Z" fill="url(#mGV)"/>
<rect x="434.6" y="531.6" width="3.4" height="24.2" rx="1.2" fill="url(#mGV)"/>
</g>
<g transform="translate(149.5,0)">
<rect x="411.6" y="324.6" width="13.8" height="14.6" rx="1.5" fill="url(#vGh)"/>
<rect x="424.6" y="329.4" width="9.8" height="4.6" fill="url(#vGv)"/>
<path d="M434.4 328.6 L448.8 328.6 L448.8 348.6 L441 348.6 L441 338.6 L437.6 338.6 Z" fill="#2f8404"/>
<rect x="441" y="328.6" width="3.6" height="20" fill="#297a00"/>
<path d="M448.8 335.8 L465.6 337 L465.6 347.6 L448.8 348.6 Z" fill="#62d012"/>
<path d="M448.8 335.8 L465.6 337 L465.6 338.4 L448.8 337.4 Z" fill="#8ae83a"/>
<rect x="448.8" y="330.2" width="12.6" height="2.6" fill="#6ee018"/>
<rect x="457.2" y="324" width="4.2" height="6.4" fill="#2f8404"/>
</g>
<g transform="translate(149.5,0)">
<g>
<rect x="412.6" y="356" width="12" height="20" fill="url(#vGh)"/>
<rect x="409.8" y="354.4" width="17.4" height="3.6" rx="1" fill="url(#vGh)"/>
<rect x="409.8" y="373.8" width="17.4" height="3.6" rx="1" fill="url(#vGh)"/>
<rect x="424" y="364.2" width="8.4" height="3.8" fill="url(#vGv)"/>
<ellipse cx="433.4" cy="366" rx="2.2" ry="7.8" fill="url(#vGv)"/>
</g></g>
<g transform="translate(149.5,0)">
<ellipse cx="449.6" cy="481.8" rx="2" ry="2.8" fill="#c9c9c9"/>
<rect x="448.9" y="483" width="1.6" height="3" fill="#9a9a9a"/>
<path d="M444.2 482.6 L447.4 484.6 L452.6 484.6 L452.6 489.6 L446.6 489.6 L444.2 488.4 Z" fill="#0a18e0"/>
<path d="M448.6 490 L451.2 490 L452.4 494 L447.4 494 Z" fill="#bdbdbd"/>
</g>
<g transform="translate(149.5,0)">
<path d="M362.8 559.6 L366.9 559.6 L366.9 567.2 L376 567.2 L376 570.6 L362.8 570.6 Z" fill="url(#mGC)"/>
<rect x="371.6" y="561" width="20.4" height="3.4" rx="1" fill="url(#mGH)"/>
<path d="M411 561.8 H426.6 L433.4 568.8 V570.6 H429.6 L425 565 H411 Z" fill="url(#mGH)"/>
<rect x="358.2" y="541" width="14" height="18.6" rx="4.5" fill="url(#mGV)"/>
<circle cx="364.6" cy="554" r="2.7" fill="#e9ffd8"/>
<circle cx="364.6" cy="554" r="1.7" fill="#111"/>
<rect x="362.2" y="531" width="5.6" height="8.6" rx="1.2" fill="url(#mGC)"/>
<rect x="364" y="539" width="2" height="3" fill="url(#mGC)"/>
<rect x="369.4" y="526.4" width="23" height="35.4" rx="6" fill="url(#mGV)"/>
<rect x="390.2" y="522.8" width="3.4" height="42" rx="1" fill="url(#mGV)"/>
<rect x="394.4" y="522.8" width="4.4" height="42" rx="1.2" fill="url(#mGV)"/>
<path d="M398.8 527.5 L407 531.5 L407 556.5 L398.8 560.8 Z" fill="url(#mGV)"/>
<rect x="406.8" y="525" width="3.6" height="37.2" rx="1" fill="url(#mGV)"/>
<rect x="410.2" y="525.8" width="18.4" height="36" rx="4" fill="url(#mGV)"/>
<rect x="412" y="529.4" width="7.4" height="1.6" fill="#e6ffd4" opacity="0.8"/>
<rect x="412" y="543" width="7.4" height="1.2" fill="#4fb81c" opacity="0.55"/>
<rect x="412" y="555.4" width="7.4" height="1.6" fill="#e6ffd4" opacity="0.8"/>
<rect x="412.4" y="520.6" width="12.4" height="6.4" fill="url(#mGC)"/>
<rect x="406" y="518.8" width="25.2" height="2.4" rx="0.8" fill="url(#mGC)"/>
<path d="M428.4 536.6 Q432 539.4 434.8 539.4 L434.8 548 Q432 548 428.4 551 Z" fill="url(#mGV)"/>
<rect x="434.6" y="531.6" width="3.4" height="24.2" rx="1.2" fill="url(#mGV)"/>
</g>
<g transform="translate(427.9,0)">
<rect x="411.8" y="334.9" width="13.6" height="1" fill="#e8e8e8" opacity=".45"/>
<rect x="421" y="328.9" width="11.6" height="4" fill="#d6d6d6"/>
<rect x="432" y="328.2" width="2.2" height="5.6" rx=".6" fill="#dadada"/>
<rect x="449.3" y="328" width="2" height="1.4" fill="#101010"/>
<rect x="449.3" y="330" width="12.4" height="1.8" fill="#737373"/>
<path d="M449.3 335.1 L466.2 336 L466.2 348.1 L449.3 349.2 Z" fill="#ff4400"/>
<path d="M462 335.8 L466.2 336 L466.2 348.1 L462 348.4 Z" fill="#f65a14" opacity=".35"/>
</g>
<g transform="translate(427.9,0)">
<g opacity="0.92">
<rect x="412.6" y="356" width="12" height="20" fill="url(#vSh)"/>
<rect x="409.8" y="354.4" width="17.4" height="3.6" rx="1" fill="url(#vSh)"/>
<rect x="409.8" y="373.8" width="17.4" height="3.6" rx="1" fill="url(#vSh)"/>
<rect x="424" y="364.2" width="8.4" height="3.8" fill="url(#vSv)"/>
<ellipse cx="433.4" cy="366" rx="2.2" ry="7.8" fill="url(#vSv)"/>
</g></g>
<g transform="translate(427.9,0)">
<ellipse cx="449.6" cy="481.8" rx="2" ry="2.8" fill="#c9c9c9"/>
<rect x="448.9" y="483" width="1.6" height="3" fill="#9a9a9a"/>
<path d="M444.2 482.6 L447.4 484.6 L452.6 484.6 L452.6 489.6 L446.6 489.6 L444.2 488.4 Z" fill="#0a18e0"/>
<path d="M448.6 490 L451.2 490 L452.4 494 L447.4 494 Z" fill="#bdbdbd"/>
</g>
<g transform="translate(427.9,0)">
<path d="M362.8 559.6 L366.9 559.6 L366.9 567.2 L376 567.2 L376 570.6 L362.8 570.6 Z" fill="url(#mSC)"/>
<rect x="371.6" y="561" width="20.4" height="3.4" rx="1" fill="url(#mSH)"/>
<path d="M411 561.8 H426.6 L433.4 568.8 V570.6 H429.6 L425 565 H411 Z" fill="url(#mSH)"/>
<rect x="358.2" y="541" width="14" height="18.6" rx="4.5" fill="url(#mSV)"/>
<circle cx="364.6" cy="554" r="2.7" fill="#f0f0f0"/>
<circle cx="364.6" cy="554" r="1.7" fill="#111"/>
<rect x="362.2" y="531" width="5.6" height="8.6" rx="1.2" fill="url(#mSC)"/>
<rect x="364" y="539" width="2" height="3" fill="url(#mSC)"/>
<rect x="369.4" y="526.4" width="23" height="35.4" rx="6" fill="url(#mSV)"/>
<rect x="390.2" y="522.8" width="3.4" height="42" rx="1" fill="url(#mSV)"/>
<rect x="394.4" y="522.8" width="4.4" height="42" rx="1.2" fill="url(#mSV)"/>
<path d="M398.8 527.5 L407 531.5 L407 556.5 L398.8 560.8 Z" fill="url(#mSV)"/>
<rect x="406.8" y="525" width="3.6" height="37.2" rx="1" fill="url(#mSV)"/>
<rect x="410.2" y="525.8" width="18.4" height="36" rx="4" fill="url(#mSV)"/>
<rect x="412" y="529.4" width="7.4" height="1.6" fill="#f4f4f4" opacity="0.8"/>
<rect x="412" y="543" width="7.4" height="1.2" fill="#8a8a8a" opacity="0.55"/>
<rect x="412" y="555.4" width="7.4" height="1.6" fill="#f4f4f4" opacity="0.8"/>
<rect x="412.4" y="520.6" width="12.4" height="6.4" fill="url(#mSC)"/>
<rect x="406" y="518.8" width="25.2" height="2.4" rx="0.8" fill="url(#mSC)"/>
<path d="M428.4 536.6 Q432 539.4 434.8 539.4 L434.8 548 Q432 548 428.4 551 Z" fill="url(#mSV)"/>
<rect x="434.6" y="531.6" width="3.4" height="24.2" rx="1.2" fill="url(#mSV)"/>
</g>
<g transform="translate(556.3,0)">
<rect x="411.8" y="334.9" width="13.6" height="1" fill="#e8e8e8" opacity=".45"/>
<rect x="421" y="328.9" width="11.6" height="4" fill="#d6d6d6"/>
<rect x="432" y="328.2" width="2.2" height="5.6" rx=".6" fill="#dadada"/>
<rect x="449.3" y="328" width="2" height="1.4" fill="#101010"/>
<rect x="449.3" y="330" width="12.4" height="1.8" fill="#737373"/>
<path d="M449.3 335.1 L466.2 336 L466.2 348.1 L449.3 349.2 Z" fill="#ff4400"/>
<path d="M462 335.8 L466.2 336 L466.2 348.1 L462 348.4 Z" fill="#f65a14" opacity=".35"/>
</g>
<g transform="translate(556.3,0)">
<g opacity="0.92">
<rect x="412.6" y="356" width="12" height="20" fill="url(#vSh)"/>
<rect x="409.8" y="354.4" width="17.4" height="3.6" rx="1" fill="url(#vSh)"/>
<rect x="409.8" y="373.8" width="17.4" height="3.6" rx="1" fill="url(#vSh)"/>
<rect x="424" y="364.2" width="8.4" height="3.8" fill="url(#vSv)"/>
<ellipse cx="433.4" cy="366" rx="2.2" ry="7.8" fill="url(#vSv)"/>
</g></g>
<g transform="translate(556.3,0)">
<ellipse cx="449.6" cy="481.8" rx="2" ry="2.8" fill="#c9c9c9"/>
<rect x="448.9" y="483" width="1.6" height="3" fill="#9a9a9a"/>
<path d="M444.2 482.6 L447.4 484.6 L452.6 484.6 L452.6 489.6 L446.6 489.6 L444.2 488.4 Z" fill="#0a18e0"/>
<path d="M448.6 490 L451.2 490 L452.4 494 L447.4 494 Z" fill="#bdbdbd"/>
</g>
<g transform="translate(556.3,0)">
<path d="M362.8 559.6 L366.9 559.6 L366.9 567.2 L376 567.2 L376 570.6 L362.8 570.6 Z" fill="url(#mSC)"/>
<rect x="371.6" y="561" width="20.4" height="3.4" rx="1" fill="url(#mSH)"/>
<path d="M411 561.8 H426.6 L433.4 568.8 V570.6 H429.6 L425 565 H411 Z" fill="url(#mSH)"/>
<rect x="358.2" y="541" width="14" height="18.6" rx="4.5" fill="url(#mSV)"/>
<circle cx="364.6" cy="554" r="2.7" fill="#f0f0f0"/>
<circle cx="364.6" cy="554" r="1.7" fill="#111"/>
<rect x="362.2" y="531" width="5.6" height="8.6" rx="1.2" fill="url(#mSC)"/>
<rect x="364" y="539" width="2" height="3" fill="url(#mSC)"/>
<rect x="369.4" y="526.4" width="23" height="35.4" rx="6" fill="url(#mSV)"/>
<rect x="390.2" y="522.8" width="3.4" height="42" rx="1" fill="url(#mSV)"/>
<rect x="394.4" y="522.8" width="4.4" height="42" rx="1.2" fill="url(#mSV)"/>
<path d="M398.8 527.5 L407 531.5 L407 556.5 L398.8 560.8 Z" fill="url(#mSV)"/>
<rect x="406.8" y="525" width="3.6" height="37.2" rx="1" fill="url(#mSV)"/>
<rect x="410.2" y="525.8" width="18.4" height="36" rx="4" fill="url(#mSV)"/>
<rect x="412" y="529.4" width="7.4" height="1.6" fill="#f4f4f4" opacity="0.8"/>
<rect x="412" y="543" width="7.4" height="1.2" fill="#8a8a8a" opacity="0.55"/>
<rect x="412" y="555.4" width="7.4" height="1.6" fill="#f4f4f4" opacity="0.8"/>
<rect x="412.4" y="520.6" width="12.4" height="6.4" fill="url(#mSC)"/>
<rect x="406" y="518.8" width="25.2" height="2.4" rx="0.8" fill="url(#mSC)"/>
<path d="M428.4 536.6 Q432 539.4 434.8 539.4 L434.8 548 Q432 548 428.4 551 Z" fill="url(#mSV)"/>
<rect x="434.6" y="531.6" width="3.4" height="24.2" rx="1.2" fill="url(#mSV)"/>
</g>
<g transform="translate(684.6,0)">
<rect x="411.8" y="334.9" width="13.6" height="1" fill="#e8e8e8" opacity=".45"/>
<rect x="421" y="328.9" width="11.6" height="4" fill="#d6d6d6"/>
<rect x="432" y="328.2" width="2.2" height="5.6" rx=".6" fill="#dadada"/>
<rect x="449.3" y="328" width="2" height="1.4" fill="#101010"/>
<rect x="449.3" y="330" width="12.4" height="1.8" fill="#737373"/>
<path d="M449.3 335.1 L466.2 336 L466.2 348.1 L449.3 349.2 Z" fill="#ff4400"/>
<path d="M462 335.8 L466.2 336 L466.2 348.1 L462 348.4 Z" fill="#f65a14" opacity=".35"/>
</g>
<g transform="translate(684.6,0)">
<g opacity="0.92">
<rect x="412.6" y="356" width="12" height="20" fill="url(#vSh)"/>
<rect x="409.8" y="354.4" width="17.4" height="3.6" rx="1" fill="url(#vSh)"/>
<rect x="409.8" y="373.8" width="17.4" height="3.6" rx="1" fill="url(#vSh)"/>
<rect x="424" y="364.2" width="8.4" height="3.8" fill="url(#vSv)"/>
<ellipse cx="433.4" cy="366" rx="2.2" ry="7.8" fill="url(#vSv)"/>
</g></g>
<g transform="translate(684.6,0)">
<ellipse cx="449.6" cy="481.8" rx="2" ry="2.8" fill="#c9c9c9"/>
<rect x="448.9" y="483" width="1.6" height="3" fill="#9a9a9a"/>
<path d="M444.2 482.6 L447.4 484.6 L452.6 484.6 L452.6 489.6 L446.6 489.6 L444.2 488.4 Z" fill="#0a18e0"/>
<path d="M448.6 490 L451.2 490 L452.4 494 L447.4 494 Z" fill="#bdbdbd"/>
</g>
<g transform="translate(684.6,0)">
<path d="M362.8 559.6 L366.9 559.6 L366.9 567.2 L376 567.2 L376 570.6 L362.8 570.6 Z" fill="url(#mSC)"/>
<rect x="371.6" y="561" width="20.4" height="3.4" rx="1" fill="url(#mSH)"/>
<path d="M411 561.8 H426.6 L433.4 568.8 V570.6 H429.6 L425 565 H411 Z" fill="url(#mSH)"/>
<rect x="358.2" y="541" width="14" height="18.6" rx="4.5" fill="url(#mSV)"/>
<circle cx="364.6" cy="554" r="2.7" fill="#f0f0f0"/>
<circle cx="364.6" cy="554" r="1.7" fill="#111"/>
<rect x="362.2" y="531" width="5.6" height="8.6" rx="1.2" fill="url(#mSC)"/>
<rect x="364" y="539" width="2" height="3" fill="url(#mSC)"/>
<rect x="369.4" y="526.4" width="23" height="35.4" rx="6" fill="url(#mSV)"/>
<rect x="390.2" y="522.8" width="3.4" height="42" rx="1" fill="url(#mSV)"/>
<rect x="394.4" y="522.8" width="4.4" height="42" rx="1.2" fill="url(#mSV)"/>
<path d="M398.8 527.5 L407 531.5 L407 556.5 L398.8 560.8 Z" fill="url(#mSV)"/>
<rect x="406.8" y="525" width="3.6" height="37.2" rx="1" fill="url(#mSV)"/>
<rect x="410.2" y="525.8" width="18.4" height="36" rx="4" fill="url(#mSV)"/>
<rect x="412" y="529.4" width="7.4" height="1.6" fill="#f4f4f4" opacity="0.8"/>
<rect x="412" y="543" width="7.4" height="1.2" fill="#8a8a8a" opacity="0.55"/>
<rect x="412" y="555.4" width="7.4" height="1.6" fill="#f4f4f4" opacity="0.8"/>
<rect x="412.4" y="520.6" width="12.4" height="6.4" fill="url(#mSC)"/>
<rect x="406" y="518.8" width="25.2" height="2.4" rx="0.8" fill="url(#mSC)"/>
<path d="M428.4 536.6 Q432 539.4 434.8 539.4 L434.8 548 Q432 548 428.4 551 Z" fill="url(#mSV)"/>
<rect x="434.6" y="531.6" width="3.4" height="24.2" rx="1.2" fill="url(#mSV)"/>
</g>
<g transform="translate(811.8,0)">
<rect x="411.8" y="334.9" width="13.6" height="1" fill="#e8e8e8" opacity=".45"/>
<rect x="421" y="328.9" width="11.6" height="4" fill="#d6d6d6"/>
<rect x="432" y="328.2" width="2.2" height="5.6" rx=".6" fill="#dadada"/>
<rect x="449.3" y="328" width="2" height="1.4" fill="#101010"/>
<rect x="449.3" y="330" width="12.4" height="1.8" fill="#737373"/>
<path d="M449.3 335.1 L466.2 336 L466.2 348.1 L449.3 349.2 Z" fill="#ff4400"/>
<path d="M462 335.8 L466.2 336 L466.2 348.1 L462 348.4 Z" fill="#f65a14" opacity=".35"/>
</g>
<g transform="translate(811.8,0)">
<g opacity="0.92">
<rect x="412.6" y="356" width="12" height="20" fill="url(#vSh)"/>
<rect x="409.8" y="354.4" width="17.4" height="3.6" rx="1" fill="url(#vSh)"/>
<rect x="409.8" y="373.8" width="17.4" height="3.6" rx="1" fill="url(#vSh)"/>
<rect x="424" y="364.2" width="8.4" height="3.8" fill="url(#vSv)"/>
<ellipse cx="433.4" cy="366" rx="2.2" ry="7.8" fill="url(#vSv)"/>
</g></g>
<g transform="translate(811.8,0)">
<ellipse cx="449.6" cy="481.8" rx="2" ry="2.8" fill="#c9c9c9"/>
<rect x="448.9" y="483" width="1.6" height="3" fill="#9a9a9a"/>
<path d="M444.2 482.6 L447.4 484.6 L452.6 484.6 L452.6 489.6 L446.6 489.6 L444.2 488.4 Z" fill="#0a18e0"/>
<path d="M448.6 490 L451.2 490 L452.4 494 L447.4 494 Z" fill="#bdbdbd"/>
</g>
<g transform="translate(811.8,0)">
<path d="M362.8 559.6 L366.9 559.6 L366.9 567.2 L376 567.2 L376 570.6 L362.8 570.6 Z" fill="url(#mSC)"/>
<rect x="371.6" y="561" width="20.4" height="3.4" rx="1" fill="url(#mSH)"/>
<path d="M411 561.8 H426.6 L433.4 568.8 V570.6 H429.6 L425 565 H411 Z" fill="url(#mSH)"/>
<rect x="358.2" y="541" width="14" height="18.6" rx="4.5" fill="url(#mSV)"/>
<circle cx="364.6" cy="554" r="2.7" fill="#f0f0f0"/>
<circle cx="364.6" cy="554" r="1.7" fill="#111"/>
<rect x="362.2" y="531" width="5.6" height="8.6" rx="1.2" fill="url(#mSC)"/>
<rect x="364" y="539" width="2" height="3" fill="url(#mSC)"/>
<rect x="369.4" y="526.4" width="23" height="35.4" rx="6" fill="url(#mSV)"/>
<rect x="390.2" y="522.8" width="3.4" height="42" rx="1" fill="url(#mSV)"/>
<rect x="394.4" y="522.8" width="4.4" height="42" rx="1.2" fill="url(#mSV)"/>
<path d="M398.8 527.5 L407 531.5 L407 556.5 L398.8 560.8 Z" fill="url(#mSV)"/>
<rect x="406.8" y="525" width="3.6" height="37.2" rx="1" fill="url(#mSV)"/>
<rect x="410.2" y="525.8" width="18.4" height="36" rx="4" fill="url(#mSV)"/>
<rect x="412" y="529.4" width="7.4" height="1.6" fill="#f4f4f4" opacity="0.8"/>
<rect x="412" y="543" width="7.4" height="1.2" fill="#8a8a8a" opacity="0.55"/>
<rect x="412" y="555.4" width="7.4" height="1.6" fill="#f4f4f4" opacity="0.8"/>
<rect x="412.4" y="520.6" width="12.4" height="6.4" fill="url(#mSC)"/>
<rect x="406" y="518.8" width="25.2" height="2.4" rx="0.8" fill="url(#mSC)"/>
<path d="M428.4 536.6 Q432 539.4 434.8 539.4 L434.8 548 Q432 548 428.4 551 Z" fill="url(#mSV)"/>
<rect x="434.6" y="531.6" width="3.4" height="24.2" rx="1.2" fill="url(#mSV)"/>
</g>
<polygon points="22.8,101.8 125.2,101.8 137,122.2 125.2,142.6 22.8,142.6 30,122.2" fill="url(#tag)" />
<polygon points="22.8,145.4 125.2,145.4 137,165.8 125.2,186.2 22.8,186.2 30,165.8" fill="url(#tag)" />
<polygon points="22.8,189 125.2,189 137,209.4 125.2,229.8 22.8,229.8 30,209.4" fill="url(#tag)" />
<polygon points="22.8,232.6 125.2,232.6 137,253 125.2,273.4 22.8,273.4 30,253" fill="url(#tag)" />
<polygon points="22.8,276.2 125.2,276.2 137,296.6 125.2,317 22.8,317 30,296.6" fill="url(#tag)" />
<polygon points="22.8,319.8 125.2,319.8 137,340.2 125.2,360.6 22.8,360.6 30,340.2" fill="url(#tag)" />
<polygon points="22.8,363.4 125.2,363.4 137,383.8 125.2,404.2 22.8,404.2 30,383.8" fill="url(#tag)" />
<polygon points="64.5,424.65 169.3,424.65 161.8,445.05 169.3,465.45 64.5,465.45 54.8,445.05" fill="url(#tag)" />
<polygon points="64.5,468.25 169.3,468.25 161.8,488.65 169.3,509.05 64.5,509.05 54.8,488.65" fill="url(#tag)" />
<polygon points="64.5,511.85 169.3,511.85 161.8,532.25 169.3,552.65 64.5,552.65 54.8,532.25" fill="url(#tag)" />
<polygon points="64.5,555.45 169.3,555.45 161.8,575.85 169.3,596.25 64.5,596.25 54.8,575.85" fill="url(#tag)" />
<polygon points="64.5,599.05 169.3,599.05 161.8,619.45 169.3,639.85 64.5,639.85 54.8,619.45" fill="url(#tag)" />
<polygon points="64.5,642.65 169.3,642.65 161.8,663.05 169.3,683.45 64.5,683.45 54.8,663.05" fill="url(#tag)" />
<polygon points="64.5,686.25 169.3,686.25 161.8,706.65 169.3,727.05 64.5,727.05 54.8,706.65" fill="url(#tag)" />
<polygon points="64.5,729.85 169.3,729.85 161.8,750.25 169.3,770.65 64.5,770.65 54.8,750.25" fill="url(#tag)" />
<polygon points="22.8,787.3 125.2,787.3 137,807.7 125.2,828.1 22.8,828.1 30,807.7" fill="url(#tag)" />
<polygon points="1461,217.4 1563.7,217.4 1575.8,237.8 1563.7,258.2 1461,258.2 1468.5,237.8" fill="url(#tag)" />
<polygon points="1461,260.95 1563.7,260.95 1575.8,281.35 1563.7,301.75 1461,301.75 1468.5,281.35" fill="url(#tag)" />
<polygon points="1461,304.5 1563.7,304.5 1575.8,324.9 1563.7,345.3 1461,345.3 1468.5,324.9" fill="url(#tag)" />
<polygon points="1461,348.05 1563.7,348.05 1575.8,368.45 1563.7,388.85 1461,388.85 1468.5,368.45" fill="url(#tag)" />
<polygon points="1471.2,563.35 1575.4,563.35 1568.4,583.75 1575.4,604.15 1471.2,604.15 1461.1,583.75" fill="url(#tag)" />
<polygon points="1471.2,606.95 1575.4,606.95 1568.4,627.35 1575.4,647.75 1471.2,647.75 1461.1,627.35" fill="url(#tag)" />
<polygon points="1471.2,650.55 1575.4,650.55 1568.4,670.95 1575.4,691.35 1471.2,691.35 1461.1,670.95" fill="url(#tag)" />
<polygon points="1471.2,694.15 1575.4,694.15 1568.4,714.55 1575.4,734.95 1471.2,734.95 1461.1,714.55" fill="url(#tag)" />
</svg>
<section id="hmi">
<span class="t" style="left:64px;top:116px;font-size:11.6px;line-height:14px;transform:translate(0.65px,0.29px) rotate(.03deg) scaleX(0.9731);">CWR</span>
<span class="t" style="left:64px;top:159px;font-size:11.6px;line-height:14px;transform:translate(0.65px,0.89px) rotate(.03deg) scaleX(0.9731);">CWR</span>
<span class="t" style="left:64px;top:203px;font-size:11.6px;line-height:14px;transform:translate(0.65px,0.49px) rotate(.03deg) scaleX(0.9731);">CWR</span>
<span class="t" style="left:64px;top:247px;font-size:11.6px;line-height:14px;transform:translate(0.65px,0.09px) rotate(.03deg) scaleX(0.9731);">CWR</span>
<span class="t" style="left:64px;top:290px;font-size:11.6px;line-height:14px;transform:translate(0.65px,0.69px) rotate(.03deg) scaleX(0.9731);">CWR</span>
<span class="t" style="left:64px;top:334px;font-size:11.6px;line-height:14px;transform:translate(0.65px,0.29px) rotate(.03deg) scaleX(0.9731);">CWR</span>
<span class="t" style="left:64px;top:377px;font-size:11.6px;line-height:14px;transform:translate(0.65px,0.89px) rotate(.03deg) scaleX(0.9731);">CWR</span>
<span class="t" style="left:101px;top:439px;font-size:11.6px;line-height:14px;transform:translate(0.45px,0.04px) rotate(.03deg) scaleX(0.9596);">CWS</span>
<span class="t" style="left:101px;top:482px;font-size:11.6px;line-height:14px;transform:translate(0.45px,0.64px) rotate(.03deg) scaleX(0.9596);">CWS</span>
<span class="t" style="left:101px;top:526px;font-size:11.6px;line-height:14px;transform:translate(0.45px,0.24px) rotate(.03deg) scaleX(0.9596);">CWS</span>
<span class="t" style="left:101px;top:569px;font-size:11.6px;line-height:14px;transform:translate(0.45px,0.84px) rotate(.03deg) scaleX(0.9596);">CWS</span>
<span class="t" style="left:101px;top:613px;font-size:11.6px;line-height:14px;transform:translate(0.45px,0.44px) rotate(.03deg) scaleX(0.9596);">CWS</span>
<span class="t" style="left:101px;top:657px;font-size:11.6px;line-height:14px;transform:translate(0.45px,0.04px) rotate(.03deg) scaleX(0.9596);">CWS</span>
<span class="t" style="left:101px;top:700px;font-size:11.6px;line-height:14px;transform:translate(0.45px,0.64px) rotate(.03deg) scaleX(0.9596);">CWS</span>
<span class="t" style="left:101px;top:744px;font-size:11.6px;line-height:14px;transform:translate(0.45px,0.24px) rotate(.03deg) scaleX(0.9596);">CWS</span>
<span class="t" style="left:44px;top:801px;font-size:11.6px;line-height:14px;transform:translate(0.31px,0.89px) rotate(.03deg) scaleX(0.9581);">CITY WATER</span>
<span class="t" style="left:1503px;top:231px;font-size:11.6px;line-height:14px;transform:translate(0.45px,0.29px) rotate(.03deg) scaleX(0.9596);">CWS</span>
<span class="t" style="left:1503px;top:274px;font-size:11.6px;line-height:14px;transform:translate(0.45px,0.84px) rotate(.03deg) scaleX(0.9596);">CWS</span>
<span class="t" style="left:1503px;top:318px;font-size:11.6px;line-height:14px;transform:translate(0.45px,0.39px) rotate(.03deg) scaleX(0.9596);">CWS</span>
<span class="t" style="left:1503px;top:361px;font-size:11.6px;line-height:14px;transform:translate(0.45px,0.94px) rotate(.03deg) scaleX(0.9596);">CWS</span>
<span class="t" style="left:1507px;top:577px;font-size:11.6px;line-height:14px;transform:translate(0.35px,0.64px) rotate(.03deg) scaleX(0.9657);">CWR</span>
<span class="t" style="left:1507px;top:621px;font-size:11.6px;line-height:14px;transform:translate(0.35px,0.24px) rotate(.03deg) scaleX(0.9657);">CWR</span>
<span class="t" style="left:1507px;top:664px;font-size:11.6px;line-height:14px;transform:translate(0.35px,0.84px) rotate(.03deg) scaleX(0.9657);">CWR</span>
<span class="t" style="left:1507px;top:708px;font-size:11.6px;line-height:14px;transform:translate(0.35px,0.44px) rotate(.03deg) scaleX(0.9657);">CWR</span>
<div class="lb" style="left:22px;top:68px;width:141.9px;height:26.9px;transform:translate(0.8px,0px)"><span class="t" style="left:20px;top:5px;font-size:15.2px;line-height:18px;transform:translate(0.71px,0.53px) rotate(.03deg) scaleX(0.9782);">Cooling Water</span></div>
<div class="lb" style="left:1392px;top:178px;width:175.9px;height:26.8px;transform:translate(0.8px,0.8px)"><span class="t" style="left:27px;top:5px;font-size:15.2px;line-height:18px;transform:translate(0.31px,0.48px) rotate(.03deg) scaleX(0.9686);">Quenching Water</span></div>
<div class="lb" style="left:1392px;top:529px;width:175.9px;height:27.4px;transform:translate(0.8px,0.2px)"><span class="t" style="left:27px;top:5px;font-size:15.2px;line-height:18px;transform:translate(0.31px,0.78px) rotate(.03deg) scaleX(0.9686);">Quenching Water</span></div>
<div class="lb" style="left:368px;top:115px;width:74.2px;height:20.3px;transform:translate(0.6px,0.9px)"><span class="t" style="left:7px;top:1px;font-size:15.2px;line-height:18px;transform:translate(0.9px,0.73px) rotate(.03deg) scaleX(0.9807);">CT-1901</span></div>
<div class="lb" style="left:1210px;top:115px;width:74.5px;height:20.3px;transform:translate(0.2px,0.9px)"><span class="t" style="left:8px;top:1px;font-size:15.2px;line-height:18px;transform:translate(0.09px,0.73px) rotate(.03deg) scaleX(0.9973);">CT-1902</span></div>
<div class="lb" style="left:436px;top:747px;width:82.1px;height:26.6px;transform:translate(0.6px,0.5px)"><span class="t" style="left:10px;top:4px;font-size:15.8px;line-height:19px;transform:translate(0.83px,0.34px) rotate(.03deg) scaleX(0.944);">PD-1901</span></div>
<div class="lb" style="left:1145px;top:747px;width:81.9px;height:26.6px;transform:translate(0.6px,0.5px)"><span class="t" style="left:10px;top:4px;font-size:15.8px;line-height:19px;transform:translate(0.91px,0.44px) rotate(.03deg) scaleX(0.9646);">PD-1902</span></div>
<div class="bn run" style="left:484px;top:127px;width:53.65px;height:26.8px;transform:translate(0.25px,0.3px)"><span class="t" style="left:11px;top:6px;font-size:13.3px;line-height:16px;color:#0a0a0a;transform:translate(0.7px,0.43px) rotate(.03deg) scaleX(0.9865);">RUN</span></div>
<div class="bn stop" style="left:1325px;top:127px;width:53.65px;height:27px;transform:translate(0.35px,0.1px)"><span class="t" style="left:9px;top:6px;font-size:13.3px;line-height:16px;color:#0a0a0a;transform:translate(0.34px,0.68px) rotate(.03deg) scaleX(0.9221);">STOP</span></div>
<div class="lb" style="left:428px;top:298px;width:76.1px;height:21.9px;transform:translate(0.4px,0.9px)"><span class="t" style="left:4px;top:1px;font-size:15.4px;line-height:19px;transform:translate(0.65px,0.85px) rotate(.03deg) scaleX(0.9457);">FS-1901A</span></div>
<div class="bn run" style="left:469px;top:323px;width:53.9px;height:27.3px;transform:translate(0.2px,0.2px)"><span class="t" style="left:14px;top:5px;font-size:13.3px;line-height:16px;color:#0a0a0a;transform:translate(0.94px,0.63px) rotate(.03deg) scaleX(1.051);">ON</span></div>
<div class="pt" style="left:432px;top:384px;width:98px;height:90px;transform:translate(0.1px,0.5px)"><div class="ph" style="height:23.4px"><span class="t" style="left:15px;top:5px;font-size:11.3px;line-height:14px;color:#fff;transform:translate(0.25px,0.39px) rotate(.03deg) scaleX(0.9566);">PT1901A</span><span class="t r" style="left:75px;top:7px;font-size:9.4px;line-height:12px;font-weight:400;color:#fff;transform:translate(0.39px,0.43px) rotate(.03deg) scaleX(1.0773);">[Bar]</span></div><div class="pr" style="top:23.4px;height:22.2px"><div class="pv" style="left:37.6px;width:59.4px;top:.6px;height:20.4px"></div><span class="t" style="left:4px;top:4px;font-size:11.9px;line-height:15px;color:#6df02c;transform:translate(0.74px,0.69px) rotate(.03deg) scaleX(0.9333);">Value</span><span class="t" style="left:55px;top:3px;font-size:16.6px;line-height:20px;color:#6df02c;transform:translate(0.62px,0.01px) rotate(.03deg) scaleX(0.9862);">1.3</span></div><div class="pr" style="top:45.6px;height:22.2px"><div class="pv" style="left:37.6px;width:59.4px;top:.6px;height:20.4px"></div><span class="t" style="left:4px;top:4px;font-size:11.9px;line-height:15px;color:#ff9c0c;transform:translate(0.08px,0.09px) rotate(.03deg) scaleX(0.9294);">Low</span><span class="t" style="left:61px;top:2px;font-size:16.6px;line-height:20px;color:#ff9c0c;transform:translate(0.65px,0.61px) rotate(.03deg) scaleX(1.2048);">0</span></div><div class="pr" style="top:67.8px;height:22.2px"><div class="pv" style="left:37.6px;width:59.4px;top:.6px;height:20.4px"></div><span class="t" style="left:4px;top:3px;font-size:11.9px;line-height:15px;color:#22e8e8;transform:translate(0.64px,0.49px) rotate(.03deg) scaleX(0.9787);">High</span><span class="t" style="left:62px;top:2px;font-size:16.6px;line-height:20px;color:#22e8e8;transform:translate(0.5px,0.21px) rotate(.03deg) scaleX(1.012);">5</span></div></div>
<div class="lb" style="left:326px;top:498px;width:75.7px;height:22.1px;transform:translate(0.9px,0.3px)"><span class="t" style="left:2px;top:1px;font-size:15.4px;line-height:19px;transform:translate(0.92px,0.7px) rotate(.03deg) scaleX(0.9754);">PU-1901A</span></div>
<div class="bn run" style="left:374px;top:565px;width:54.4px;height:26.7px;transform:translate(0.8px,0px)"><span class="t" style="left:11px;top:5px;font-size:13.3px;line-height:16px;color:#0a0a0a;transform:translate(0.32px,0.83px) rotate(.03deg) scaleX(1.0124);">RUN</span></div>
<span class="t" style="left:371px;top:536px;font-size:14.6px;line-height:18px;color:#0a0a0a;transform:translate(0.26px,0.92px) rotate(.03deg) scaleX(1.0791);">#6</span>
<div class="lb" style="left:579px;top:298px;width:76.6px;height:21.9px;transform:translate(0.2px,0.9px)"><span class="t" style="left:5px;top:1px;font-size:15.4px;line-height:19px;transform:translate(0.26px,0.85px) rotate(.03deg) scaleX(0.9383);">FS-1901B</span></div>
<div class="bn run" style="left:617px;top:323px;width:54.7px;height:27.3px;transform:translate(1px,0.2px)"><span class="t" style="left:15px;top:5px;font-size:13.3px;line-height:16px;color:#0a0a0a;transform:translate(0.94px,0.63px) rotate(.03deg) scaleX(1.0618);">ON</span></div>
<div class="pt" style="left:580px;top:384px;width:98.4px;height:90px;transform:translate(0.4px,0.5px)"><div class="ph" style="height:23.4px"><span class="t" style="left:15px;top:5px;font-size:11.3px;line-height:14px;color:#fff;transform:translate(0.24px,0.39px) rotate(.03deg) scaleX(0.9612);">PT1901B</span><span class="t r" style="left:75px;top:7px;font-size:9.4px;line-height:12px;font-weight:400;color:#fff;transform:translate(0.39px,0.43px) rotate(.03deg) scaleX(1.0773);">[Bar]</span></div><div class="pr" style="top:23.4px;height:22.2px"><div class="pv" style="left:37.6px;width:59.8px;top:.6px;height:20.4px"></div><span class="t" style="left:4px;top:4px;font-size:11.9px;line-height:15px;color:#6df02c;transform:translate(0.74px,0.69px) rotate(.03deg) scaleX(0.9333);">Value</span><span class="t" style="left:63px;top:3px;font-size:16.6px;line-height:20px;color:#6df02c;transform:translate(0.01px,0.01px) rotate(.03deg) scaleX(0.8972);">1</span></div><div class="pr" style="top:45.6px;height:22.2px"><div class="pv" style="left:37.6px;width:59.8px;top:.6px;height:20.4px"></div><span class="t" style="left:4px;top:4px;font-size:11.9px;line-height:15px;color:#ff9c0c;transform:translate(0.08px,0.09px) rotate(.03deg) scaleX(0.9294);">Low</span><span class="t" style="left:61px;top:2px;font-size:16.6px;line-height:20px;color:#ff9c0c;transform:translate(0.85px,0.61px) rotate(.03deg) scaleX(1.2048);">0</span></div><div class="pr" style="top:67.8px;height:22.2px"><div class="pv" style="left:37.6px;width:59.8px;top:.6px;height:20.4px"></div><span class="t" style="left:4px;top:3px;font-size:11.9px;line-height:15px;color:#22e8e8;transform:translate(0.64px,0.49px) rotate(.03deg) scaleX(0.9787);">High</span><span class="t" style="left:62px;top:2px;font-size:16.6px;line-height:20px;color:#22e8e8;transform:translate(0.7px,0.21px) rotate(.03deg) scaleX(1.012);">5</span></div></div>
<div class="lb" style="left:476px;top:498px;width:75.8px;height:22.1px;transform:translate(0.6px,0.3px)"><span class="t" style="left:3px;top:1px;font-size:15.4px;line-height:19px;transform:translate(0.33px,0.7px) rotate(.03deg) scaleX(0.9712);">PU-1901B</span></div>
<div class="bn run" style="left:523px;top:565px;width:54.6px;height:26.7px;transform:translate(0.9px,0px)"><span class="t" style="left:11px;top:5px;font-size:13.3px;line-height:16px;color:#0a0a0a;transform:translate(0.72px,0.83px) rotate(.03deg) scaleX(1.0234);">RUN</span></div>
<span class="t" style="left:521px;top:536px;font-size:14.6px;line-height:18px;color:#0a0a0a;transform:translate(0.87px,0.92px) rotate(.03deg) scaleX(1.0498);">#5</span>
<div class="lb" style="left:857px;top:298px;width:75.7px;height:21.9px;transform:translate(0.3px,0.9px)"><span class="t" style="left:4px;top:1px;font-size:15.4px;line-height:19px;transform:translate(0.6px,0.85px) rotate(.03deg) scaleX(0.9464);">FS-1902A</span></div>
<div class="bn stop" style="left:896px;top:323px;width:53.75px;height:27.3px;transform:translate(0.1px,0.2px)"><span class="t" style="left:14px;top:5px;font-size:13.3px;line-height:16px;color:#0a0a0a;transform:translate(0.26px,0.63px) rotate(.03deg) scaleX(0.912);">OFF</span></div>
<div class="pt" style="left:858px;top:384px;width:97.8px;height:90px;transform:translate(0px,0.5px)"><div class="ph" style="height:23.4px"><span class="t" style="left:15px;top:5px;font-size:11.3px;line-height:14px;color:#fff;transform:translate(0.81px,0.39px) rotate(.03deg) scaleX(0.9427);">PT1902A</span><span class="t r" style="left:75px;top:7px;font-size:9.4px;line-height:12px;font-weight:400;color:#fff;transform:translate(0.67px,0.43px) rotate(.03deg) scaleX(1.1096);">[Bar]</span></div><div class="pr" style="top:23.4px;height:22.2px"><div class="pv" style="left:37.6px;width:59.2px;top:.6px;height:20.4px"></div><span class="t" style="left:4px;top:4px;font-size:11.9px;line-height:15px;color:#6df02c;transform:translate(0.74px,0.69px) rotate(.03deg) scaleX(0.9333);">Value</span><span class="t" style="left:54px;top:3px;font-size:16.6px;line-height:20px;color:#6df02c;transform:translate(0.89px,0.01px) rotate(.03deg) scaleX(1.0146);">1.4</span></div><div class="pr" style="top:45.6px;height:22.2px"><div class="pv" style="left:37.6px;width:59.2px;top:.6px;height:20.4px"></div><span class="t" style="left:4px;top:4px;font-size:11.9px;line-height:15px;color:#ff9c0c;transform:translate(0.08px,0.09px) rotate(.03deg) scaleX(0.9294);">Low</span><span class="t" style="left:61px;top:2px;font-size:16.6px;line-height:20px;color:#ff9c0c;transform:translate(0.55px,0.61px) rotate(.03deg) scaleX(1.2048);">0</span></div><div class="pr" style="top:67.8px;height:22.2px"><div class="pv" style="left:37.6px;width:59.2px;top:.6px;height:20.4px"></div><span class="t" style="left:4px;top:3px;font-size:11.9px;line-height:15px;color:#22e8e8;transform:translate(0.64px,0.49px) rotate(.03deg) scaleX(0.9787);">High</span><span class="t" style="left:62px;top:2px;font-size:16.6px;line-height:20px;color:#22e8e8;transform:translate(0.4px,0.21px) rotate(.03deg) scaleX(1.012);">5</span></div></div>
<div class="lb" style="left:755px;top:498px;width:76px;height:22.1px;transform:translate(0px,0.3px)"><span class="t" style="left:2px;top:1px;font-size:15.4px;line-height:19px;transform:translate(0.42px,0.7px) rotate(.03deg) scaleX(0.9825);">PU-1902A</span></div>
<div class="bn stop" style="left:802px;top:564px;width:54.2px;height:26.9px;transform:translate(0.6px,0.8px)"><span class="t" style="left:9px;top:5px;font-size:13.3px;line-height:16px;color:#0a0a0a;transform:translate(0.19px,0.93px) rotate(.03deg) scaleX(0.9306);">STOP</span></div>
<span class="t" style="left:800px;top:537px;font-size:14.6px;line-height:18px;color:#0a0a0a;transform:translate(0.17px,0.02px) rotate(.03deg) scaleX(1.0509);">#4</span>
<div class="lb" style="left:986px;top:298px;width:76px;height:21.9px;transform:translate(0.7px,0.9px)"><span class="t" style="left:4px;top:1px;font-size:15.4px;line-height:19px;transform:translate(0.96px,0.85px) rotate(.03deg) scaleX(0.9412);">FS-1902B</span></div>
<div class="bn stop" style="left:1024px;top:323px;width:53.6px;height:27.3px;transform:translate(0.6px,0.2px)"><span class="t" style="left:14px;top:5px;font-size:13.3px;line-height:16px;color:#0a0a0a;transform:translate(0.11px,0.63px) rotate(.03deg) scaleX(0.914);">OFF</span></div>
<div class="pt" style="left:986px;top:384px;width:98.2px;height:90px;transform:translate(0.6px,0.5px)"><div class="ph" style="height:23.4px"><span class="t" style="left:15px;top:5px;font-size:11.3px;line-height:14px;color:#fff;transform:translate(0.8px,0.39px) rotate(.03deg) scaleX(0.9472);">PT1902B</span><span class="t r" style="left:75px;top:7px;font-size:9.4px;line-height:12px;font-weight:400;color:#fff;transform:translate(0.67px,0.43px) rotate(.03deg) scaleX(1.1096);">[Bar]</span></div><div class="pr" style="top:23.4px;height:22.2px"><div class="pv" style="left:37.6px;width:59.6px;top:.6px;height:20.4px"></div><span class="t" style="left:4px;top:4px;font-size:11.9px;line-height:15px;color:#6df02c;transform:translate(0.74px,0.69px) rotate(.03deg) scaleX(0.9333);">Value</span><span class="t" style="left:55px;top:3px;font-size:16.6px;line-height:20px;color:#6df02c;transform:translate(0.29px,0.01px) rotate(.03deg) scaleX(1.0156);">1.5</span></div><div class="pr" style="top:45.6px;height:22.2px"><div class="pv" style="left:37.6px;width:59.6px;top:.6px;height:20.4px"></div><span class="t" style="left:4px;top:4px;font-size:11.9px;line-height:15px;color:#ff9c0c;transform:translate(0.08px,0.09px) rotate(.03deg) scaleX(0.9294);">Low</span><span class="t" style="left:61px;top:2px;font-size:16.6px;line-height:20px;color:#ff9c0c;transform:translate(0.75px,0.61px) rotate(.03deg) scaleX(1.2048);">0</span></div><div class="pr" style="top:67.8px;height:22.2px"><div class="pv" style="left:37.6px;width:59.6px;top:.6px;height:20.4px"></div><span class="t" style="left:4px;top:3px;font-size:11.9px;line-height:15px;color:#22e8e8;transform:translate(0.64px,0.49px) rotate(.03deg) scaleX(0.9787);">High</span><span class="t" style="left:62px;top:2px;font-size:16.6px;line-height:20px;color:#22e8e8;transform:translate(0.6px,0.21px) rotate(.03deg) scaleX(1.012);">5</span></div></div>
<div class="lb" style="left:883px;top:498px;width:75.9px;height:22.1px;transform:translate(0.1px,0.3px)"><span class="t" style="left:3px;top:1px;font-size:15.4px;line-height:19px;transform:translate(0.53px,0.7px) rotate(.03deg) scaleX(0.9683);">PU-1902B</span></div>
<div class="bn stop" style="left:930px;top:564px;width:54.3px;height:26.9px;transform:translate(0.7px,0.8px)"><span class="t" style="left:9px;top:5px;font-size:13.3px;line-height:16px;color:#0a0a0a;transform:translate(0.19px,0.93px) rotate(.03deg) scaleX(0.942);">STOP</span></div>
<span class="t" style="left:928px;top:537px;font-size:14.6px;line-height:18px;color:#0a0a0a;transform:translate(0.17px,0.02px) rotate(.03deg) scaleX(1.0662);">#3</span>
<div class="lb" style="left:1114px;top:298px;width:75.7px;height:21.9px;transform:translate(0.5px,0.9px)"><span class="t" style="left:5px;top:1px;font-size:15.4px;line-height:19px;transform:translate(0.16px,0.85px) rotate(.03deg) scaleX(0.9351);">FS-1902C</span></div>
<div class="bn stop" style="left:1154px;top:323px;width:53.3px;height:27.3px;transform:translate(0.1px,0.2px)"><span class="t" style="left:13px;top:5px;font-size:13.3px;line-height:16px;color:#0a0a0a;transform:translate(0.52px,0.63px) rotate(.03deg) scaleX(0.9101);">OFF</span></div>
<div class="pt" style="left:1115px;top:384px;width:98px;height:90px;transform:translate(0px,0.5px)"><div class="ph" style="height:23.4px"><span class="t" style="left:15px;top:5px;font-size:11.3px;line-height:14px;color:#fff;transform:translate(0.81px,0.39px) rotate(.03deg) scaleX(0.9438);">PT1902C</span><span class="t r" style="left:75px;top:7px;font-size:9.4px;line-height:12px;font-weight:400;color:#fff;transform:translate(0.67px,0.43px) rotate(.03deg) scaleX(1.1096);">[Bar]</span></div><div class="pr" style="top:23.4px;height:22.2px"><div class="pv" style="left:37.6px;width:59.4px;top:.6px;height:20.4px"></div><span class="t" style="left:4px;top:4px;font-size:11.9px;line-height:15px;color:#6df02c;transform:translate(0.74px,0.69px) rotate(.03deg) scaleX(0.9333);">Value</span><span class="t" style="left:55px;top:3px;font-size:16.6px;line-height:20px;color:#6df02c;transform:translate(0.07px,0.01px) rotate(.03deg) scaleX(1.0327);">1.6</span></div><div class="pr" style="top:45.6px;height:22.2px"><div class="pv" style="left:37.6px;width:59.4px;top:.6px;height:20.4px"></div><span class="t" style="left:4px;top:4px;font-size:11.9px;line-height:15px;color:#ff9c0c;transform:translate(0.08px,0.09px) rotate(.03deg) scaleX(0.9294);">Low</span><span class="t" style="left:61px;top:2px;font-size:16.6px;line-height:20px;color:#ff9c0c;transform:translate(0.65px,0.61px) rotate(.03deg) scaleX(1.2048);">0</span></div><div class="pr" style="top:67.8px;height:22.2px"><div class="pv" style="left:37.6px;width:59.4px;top:.6px;height:20.4px"></div><span class="t" style="left:4px;top:3px;font-size:11.9px;line-height:15px;color:#22e8e8;transform:translate(0.64px,0.49px) rotate(.03deg) scaleX(0.9787);">High</span><span class="t" style="left:62px;top:2px;font-size:16.6px;line-height:20px;color:#22e8e8;transform:translate(0.5px,0.21px) rotate(.03deg) scaleX(1.012);">5</span></div></div>
<div class="lb" style="left:1011px;top:498px;width:76.3px;height:22.1px;transform:translate(0.3px,0.3px)"><span class="t" style="left:3px;top:1px;font-size:15.4px;line-height:19px;transform:translate(0.64px,0.7px) rotate(.03deg) scaleX(0.9581);">PU-1902C</span></div>
<div class="bn stop" style="left:1059px;top:564px;width:54.6px;height:26.9px;transform:translate(0px,0.8px)"><span class="t" style="left:9px;top:5px;font-size:13.3px;line-height:16px;color:#0a0a0a;transform:translate(0.49px,0.93px) rotate(.03deg) scaleX(0.9363);">STOP</span></div>
<span class="t" style="left:1056px;top:537px;font-size:14.6px;line-height:18px;color:#0a0a0a;transform:translate(0.06px,0.02px) rotate(.03deg) scaleX(1.0856);">#2</span>
<div class="lb" style="left:1241px;top:298px;width:76.1px;height:21.9px;transform:translate(0.9px,0.9px)"><span class="t" style="left:4px;top:1px;font-size:15.4px;line-height:19px;transform:translate(0.64px,0.85px) rotate(.03deg) scaleX(0.9576);">FS-1902D</span></div>
<div class="bn stop" style="left:1280px;top:323px;width:54.45px;height:27.3px;transform:translate(0.4px,0.2px)"><span class="t" style="left:14px;top:5px;font-size:13.3px;line-height:16px;color:#0a0a0a;transform:translate(0.06px,0.63px) rotate(.03deg) scaleX(0.9218);">OFF</span></div>
<div class="pt" style="left:1241px;top:384px;width:98px;height:90px;transform:translate(0.6px,0.5px)"><div class="ph" style="height:23.4px"><span class="t" style="left:15px;top:5px;font-size:11.3px;line-height:14px;color:#fff;transform:translate(0.81px,0.39px) rotate(.03deg) scaleX(0.9461);">PT1902D</span><span class="t r" style="left:75px;top:7px;font-size:9.4px;line-height:12px;font-weight:400;color:#fff;transform:translate(0.67px,0.43px) rotate(.03deg) scaleX(1.1096);">[Bar]</span></div><div class="pr" style="top:23.4px;height:22.2px"><div class="pv" style="left:37.6px;width:59.4px;top:.6px;height:20.4px"></div><span class="t" style="left:4px;top:4px;font-size:11.9px;line-height:15px;color:#6df02c;transform:translate(0.74px,0.69px) rotate(.03deg) scaleX(0.9333);">Value</span><span class="t" style="left:55px;top:3px;font-size:16.6px;line-height:20px;color:#6df02c;transform:translate(0.29px,0.01px) rotate(.03deg) scaleX(1.018);">1.7</span></div><div class="pr" style="top:45.6px;height:22.2px"><div class="pv" style="left:37.6px;width:59.4px;top:.6px;height:20.4px"></div><span class="t" style="left:4px;top:4px;font-size:11.9px;line-height:15px;color:#ff9c0c;transform:translate(0.08px,0.09px) rotate(.03deg) scaleX(0.9294);">Low</span><span class="t" style="left:61px;top:2px;font-size:16.6px;line-height:20px;color:#ff9c0c;transform:translate(0.65px,0.61px) rotate(.03deg) scaleX(1.2048);">0</span></div><div class="pr" style="top:67.8px;height:22.2px"><div class="pv" style="left:37.6px;width:59.4px;top:.6px;height:20.4px"></div><span class="t" style="left:4px;top:3px;font-size:11.9px;line-height:15px;color:#22e8e8;transform:translate(0.64px,0.49px) rotate(.03deg) scaleX(0.9787);">High</span><span class="t" style="left:62px;top:2px;font-size:16.6px;line-height:20px;color:#22e8e8;transform:translate(0.5px,0.21px) rotate(.03deg) scaleX(1.012);">5</span></div></div>
<div class="lb" style="left:1139px;top:498px;width:75.6px;height:22.1px;transform:translate(0.1px,0.3px)"><span class="t" style="left:2px;top:1px;font-size:15.4px;line-height:19px;transform:translate(0.41px,0.7px) rotate(.03deg) scaleX(0.9872);">PU-1902D</span></div>
<div class="bn stop" style="left:1186px;top:564px;width:54.8px;height:26.9px;transform:translate(0.5px,0.8px)"><span class="t" style="left:9px;top:5px;font-size:13.3px;line-height:16px;color:#0a0a0a;transform:translate(0.49px,0.93px) rotate(.03deg) scaleX(0.9363);">STOP</span></div>
<span class="t" style="left:1184px;top:537px;font-size:14.6px;line-height:18px;color:#0a0a0a;transform:translate(0.48px,0.02px) rotate(.03deg) scaleX(0.9986);">#1</span>
<div class="pt" style="left:714px;top:685px;width:134px;height:89.3px;transform:translate(0px,0.3px)"><div class="ph" style="height:23px"><span class="t" style="left:7px;top:5px;font-size:11.3px;line-height:14px;color:#fff;transform:translate(0.27px,0.39px) rotate(.03deg) scaleX(0.9453);">Cooling Water Temp</span><span class="t r" style="left:116px;top:7px;font-size:9.4px;line-height:12px;font-weight:400;color:#fff;transform:translate(0.52px,0.43px) rotate(.03deg) scaleX(1.0362);">[°C]</span></div><div class="pr" style="top:23px;height:22.1px"><div class="pv" style="left:37.6px;width:95.4px;top:.6px;height:20.3px"></div><span class="t" style="left:4px;top:4px;font-size:11.9px;line-height:15px;color:#6df02c;transform:translate(0.74px,0.69px) rotate(.03deg) scaleX(0.9333);">Value</span><span class="t" style="left:69px;top:3px;font-size:16.6px;line-height:20px;color:#6df02c;transform:translate(0.01px,0.01px) rotate(.03deg) scaleX(1.0104);">31.3</span></div><div class="pr" style="top:45.1px;height:22.1px"><div class="pv" style="left:37.6px;width:95.4px;top:.6px;height:20.3px"></div><span class="t" style="left:4px;top:4px;font-size:11.9px;line-height:15px;color:#ff9c0c;transform:translate(0.08px,0.19px) rotate(.03deg) scaleX(0.9294);">Low</span><span class="t" style="left:79px;top:2px;font-size:16.6px;line-height:20px;color:#ff9c0c;transform:translate(0.65px,0.71px) rotate(.03deg) scaleX(1.2048);">0</span></div><div class="pr" style="top:67.2px;height:22.1px"><div class="pv" style="left:37.6px;width:95.4px;top:.6px;height:20.3px"></div><span class="t" style="left:4px;top:3px;font-size:11.9px;line-height:15px;color:#22e8e8;transform:translate(0.64px,0.69px) rotate(.03deg) scaleX(0.9787);">High</span><span class="t" style="left:70px;top:2px;font-size:16.6px;line-height:20px;color:#22e8e8;transform:translate(0.94px,0.41px) rotate(.03deg) scaleX(1.0168);">100</span></div></div>
</section>
<footer id="sb"><div class="sc y" style="left:0px;width:114px"><span class="t r" style="left:4px;top:4px;font-size:12.2px;line-height:15px;font-weight:400;color:#1c1c1c;transform:translate(0.02px,0.1px) rotate(.03deg) scaleX(0.9479);">2025/01/17 14:02:49</span></div><div class="sc g" style="left:115.8px;width:55.8px"><span class="t r" style="left:3px;top:4px;font-size:12.2px;line-height:15px;font-weight:400;color:#1c1c1c;transform:translate(0.52px,0.1px) rotate(.03deg) scaleX(0.9022);">DataBase</span></div><div class="sc g" style="left:173.8px;width:56.8px"><span class="t r" style="left:3px;top:4px;font-size:12.2px;line-height:15px;font-weight:400;color:#1c1c1c;transform:translate(0.51px,0.1px) rotate(.03deg) scaleX(0.9139);">PLC-Main</span></div><div class="sc g" style="left:232.6px;width:61.4px"><span class="t r" style="left:3px;top:4px;font-size:12.2px;line-height:15px;font-weight:400;color:#1c1c1c;transform:translate(0.56px,0.1px) rotate(.03deg) scaleX(0.8633);">PLC-SieBA</span></div><div class="sc g" style="left:296px;width:60.6px"><span class="t r" style="left:3px;top:4px;font-size:12.2px;line-height:15px;font-weight:400;color:#1c1c1c;transform:translate(0.16px,0.1px) rotate(.03deg) scaleX(0.8654);">PLC-SieAP</span></div><div class="sc g" style="left:358.6px;width:76px"><span class="t r" style="left:3px;top:4px;font-size:12.2px;line-height:15px;font-weight:400;color:#1c1c1c;transform:translate(0.13px,0.1px) rotate(.03deg) scaleX(0.8866);">PLC-SieChem</span></div><div class="sc g" style="left:437px;width:45.4px"><span class="t r" style="left:3px;top:4px;font-size:12.2px;line-height:15px;font-weight:400;color:#1c1c1c;transform:translate(0.35px,0.1px) rotate(.03deg) scaleX(0.8715);">PLC-AB</span></div><div class="sc g" style="left:484.4px;width:51.4px"><span class="t r" style="left:3px;top:4px;font-size:12.2px;line-height:15px;font-weight:400;color:#1c1c1c;transform:translate(0.69px,0.1px) rotate(.03deg) scaleX(0.9274);">PLC-OM</span></div><div class="sc g" style="left:537.8px;width:52.6px"><span class="t r" style="left:3px;top:4px;font-size:12.2px;line-height:15px;font-weight:400;color:#1c1c1c;transform:translate(0.37px,0.1px) rotate(.03deg) scaleX(0.8466);">PLC-XGB</span></div><div class="sc g" style="left:592.4px;width:49.8px"><span class="t r" style="left:3px;top:4px;font-size:12.2px;line-height:15px;font-weight:400;color:#1c1c1c;transform:translate(0.34px,0.1px) rotate(.03deg) scaleX(0.8763);">PLC-XGI</span></div><div id="tagb"><span class="t r" style="left:3px;top:3px;font-size:12.2px;line-height:15px;font-weight:400;color:#1c1c1c;transform:translate(0.78px,0.7px) rotate(.03deg) scaleX(0.9161);">Tag</span></div><div id="ap"><svg class="ic" style="left:0;top:0" width="17" height="18" viewBox="0 0 17 18"><path d="M8.4 0.4 L15.6 4.6 V13 L8.4 17.4 L1 13 V4.6 Z" fill="#2a7fe0"/><path d="M4.6 4.2 L8.6 1.8 L14.6 5.2 V8.6 L10 6 L5.6 8.6 L4 7.2 Z" fill="#d81e2a"/><path d="M2.4 9.8 L10.4 14.2 M2.8 11.8 L9.2 15.4 M4.4 8.4 L12 12.6 M6.8 7.4 L13.4 11" stroke="#fff" stroke-width="0.9"/></svg><span class="t" style="left:17px;top:-1px;font-size:11.2px;line-height:14px;color:#1a6fd6;transform:translate(0.03px,0.15px) rotate(.03deg) scaleX(1.329);">AN PHAT</span><span class="t" style="left:23px;top:12px;font-size:3.4px;line-height:5px;color:#d8232e;transform:translate(0.51px,0.87px) rotate(.03deg) scaleX(1.0563);">AUTOMATION - TECHNOLOGY</span></div></footer>
<footer id="task"><div id="tki"><svg class="ic" style="left:16.2px;top:10.2px" width="20" height="20" viewBox="0 0 20 20"><defs><linearGradient id="wn" x1="0" y1="0" x2="1" y2="1"><stop offset="0" stop-color="#5fd0ff"/><stop offset="1" stop-color="#0f8fe2"/></linearGradient></defs><path d="M0 0 H9.4 V9.4 H0 Z M10.6 0 H20 V9.4 H10.6 Z M0 10.6 H9.4 V20 H0 Z M10.6 10.6 H20 V20 H10.6 Z" fill="url(#wn)"/></svg><div id="srch"><svg class="ic" style="left:8.6px;top:6.6px" width="15" height="15" viewBox="0 0 15 15" fill="none" stroke="#e4e4e4" stroke-width="1.4"><circle cx="6.2" cy="6.2" r="4.6"/><path d="M9.6 9.6 L13.4 13.4" stroke-linecap="round"/></svg><span class="t r" style="left:30px;top:7px;font-size:12.4px;line-height:15px;font-weight:400;color:#d2d2d2;transform:translate(0.5px,0.27px) rotate(.03deg) scaleX(0.8961);">Search</span><svg class="ic" style="left:142.6px;top:3px" width="34" height="22" viewBox="0 0 34 22"><path d="M1 15.6 H33 L30 18 H31.6 L28.6 20.4 H5.4 L2.4 18 H4 Z" fill="#2ea8e0"/><path d="M4 15.6 H30 L28 17 H6 Z" fill="#5fd0f5"/><path d="M11.6 18.4 Q17 15.8 21.4 18.4 L20 21.4 H13 Z" fill="#d9b48c"/><path d="M11 10.4 Q16.4 6.4 22.6 10.2 Q25.2 12.2 24.8 14.4 Q18 16.6 12.6 14.6 Q10.2 12.6 11 10.4 Z" fill="#e7c1a4"/><path d="M12.4 2.2 Q14.2 0.4 16 2 Q16.8 4.6 15.4 8.4 L12.8 9.6 Q13.6 5.6 12.4 2.2 Z" fill="#ecd3b4"/><path d="M12.6 2.6 L14 4 L9.8 12.8 L8.6 12.6 Z" fill="#e2603a"/><path d="M13 1.6 Q14.6 0.2 16 1.6 L14.4 2.6 Z" fill="#f0c43c"/></svg></div><svg class="ic" style="left:239.6px;top:10.6px" width="21.4" height="18.6" viewBox="0 0 21.4 18.6"><path d="M0.6 2.4 Q0.6 0.6 2.4 0.6 H7.4 L9.8 2.8 H19 Q20.8 2.8 20.8 4.6 V16.6 Q20.8 18 19.4 18 H2 Q0.6 18 0.6 16.6 Z" fill="#f6b92c"/><path d="M0.6 5.4 H20.8 V16.6 Q20.8 18 19.4 18 H2 Q0.6 18 0.6 16.6 Z" fill="#ffd150"/><rect x="4.4" y="12.6" width="12.6" height="5.4" rx="1.2" fill="#1b78d4"/><rect x="7" y="15.4" width="7.4" height="2.6" fill="#0c5cb2"/></svg><svg class="ic" style="left:276.4px;top:9.2px" width="21" height="22" viewBox="0 0 21 22"><circle cx="10.2" cy="11.4" r="9.8" fill="#7fc241"/><circle cx="10.2" cy="11.4" r="5.9" fill="#e9f5dc"/><circle cx="10.2" cy="11.4" r="4.4" fill="#7fc241"/><circle cx="9.4" cy="11.6" r="2.3" fill="#e9f5dc"/><path d="M10.2 11.4 L14.6 0.6 L21 5.6 Z" fill="#f6fbf0"/><path d="M11.6 7.6 L13.2 3.4 L14.6 4 L13 8.2 Z M14.6 9.2 L18.4 6.2 L19.4 7.6 L15.4 10.2 Z" fill="#e53a1e"/></svg><div id="tia"><span class="t r" style="left:1px;top:-2px;font-size:11.8px;line-height:15px;font-weight:400;color:#fff;transform:translate(0.38px,0.46px) rotate(.03deg) scaleX(0.9386);">TIA</span><span class="t" style="left:0px;top:8px;font-size:11.8px;line-height:15px;color:#8f9be0;transform:translate(0.94px,0.16px) rotate(.03deg) scaleX(0.9378);">V17</span></div><div class="dash" style="left:320.8px"></div><div class="dash" style="left:357.6px"></div><svg class="ic" style="left:349.6px;top:6.6px" width="24" height="24" viewBox="0 0 24 24" fill="none"><circle cx="10.6" cy="12.8" r="8.8" fill="#202020" stroke="#e0e0e0" stroke-width="1.3"/><path d="M10.6 12.8 Q6.6 11.2 7.8 7.2 M10.6 12.8 Q14 10.2 16.8 13.2 M10.6 12.8 Q11.2 17 7.2 18.2" stroke="#e0e0e0" stroke-width="1.3"/><circle cx="18.2" cy="5.4" r="4.9" fill="#f40612"/></svg><div id="act"></div><svg class="ic" style="left:386.7px;top:9.4px" width="20.3" height="20.6" viewBox="0 0 16.1 17" preserveAspectRatio="none"><defs><linearGradient id="srn386" x1="0" y1="0" x2="1" y2="0"><stop offset="0" stop-color="#f4361a"/><stop offset=".3" stop-color="#ff5a2a"/><stop offset=".55" stop-color="#fb3616"/><stop offset="1" stop-color="#ee1a0a"/></linearGradient><linearGradient id="srb386" x1="0" y1="0" x2="1" y2="0"><stop offset="0" stop-color="#2d3a48"/><stop offset=".46" stop-color="#33424f"/><stop offset=".5" stop-color="#050505"/><stop offset="1" stop-color="#000"/></linearGradient></defs><path d="M2.2 13 V3.2 Q2.2 0.5 4.6 0.2 H11.4 Q12.2 0.2 12.8 0.9 L13.8 2 Q14.2 2.5 14.2 3.2 V13 Z" fill="url(#srn386)"/><rect x="5.2" y="4.4" width="2.6" height="8" rx="1.2" fill="#ff7a3a" opacity=".7"/><path d="M0.2 13.4 Q0.2 12.7 1 12.7 H15.2 Q16 12.7 16 13.4 V16.6 Q16 17 15.6 17 H0.6 Q0.2 17 0.2 16.6 Z" fill="url(#srb386)"/></svg><div id="actl"></div><span class="t r" style="left:1544px;top:6px;font-size:10.6px;line-height:13px;font-weight:400;color:#e6e6e6;transform:translate(0.1px,0.95px) rotate(.03deg) scaleX(0.9368);">2:02 PM</span><span class="t r" style="left:1534px;top:20px;font-size:10.6px;line-height:13px;font-weight:400;color:#e6e6e6;transform:translate(0.01px,0.05px) rotate(.03deg) scaleX(0.9945);">1/17/2025</span></div></footer>
<svg id="cur" width="12" height="18" viewBox="-1 -1 12 18" style="position:absolute;left:1259.1px;top:94.05px"><path d="M0 0 L0 13.9 L3.3 10.9 L5.5 15.7 L7.5 14.8 L5.3 10.1 L9.7 9.9 Z" fill="#fff" stroke="#222" stroke-width="1" stroke-linejoin="round"/></svg>
</div>
</body>
</html>
